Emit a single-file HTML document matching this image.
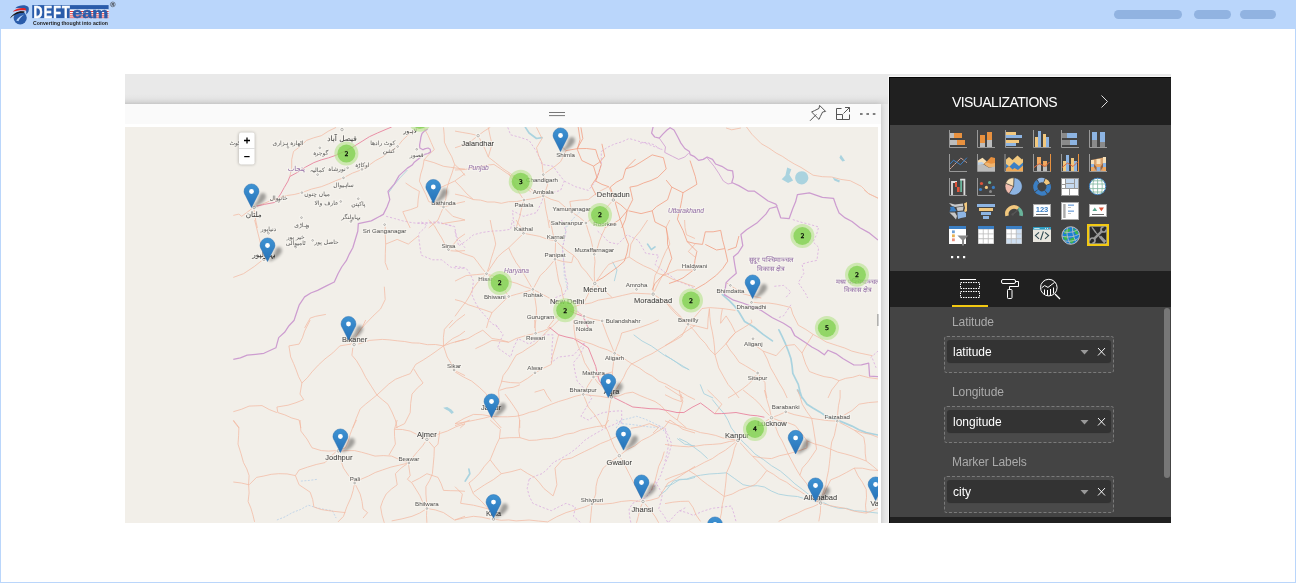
<!DOCTYPE html>
<html lang="en">
<head>
<meta charset="utf-8">
<title>DEFTeam - Map Visualization</title>
<style>
*{box-sizing:border-box;margin:0;padding:0}
html,body{width:1296px;height:583px;overflow:hidden;background:#fff;font-family:"Liberation Sans","DejaVu Sans",sans-serif}
#frame{position:absolute;left:0;top:0;width:1296px;height:583px;border:1px solid #bad6fb;border-top:none}
#hdr{position:absolute;left:0;top:0;width:1296px;height:29px;background:#bad6fb}
.pill{position:absolute;top:10px;height:9px;border-radius:5px;background:#91b3e1}
#logo{position:absolute;left:0;top:0}
#shot,#hdr{will-change:transform}
#shot{position:absolute;left:125px;top:74px;width:1046px;height:449px;background:#e9e9e9;overflow:hidden}
#shade{position:absolute;left:0;top:20px;width:764px;height:10px;background:linear-gradient(#e9e9e9,#dedede)}
#card{position:absolute;left:-6px;top:30px;width:762px;height:430px;background:#fafafa;box-shadow:0 0 6px rgba(0,0,0,.2)}
#cardwhite{position:absolute;left:0;top:20px;width:762px;height:410px;background:#fff}
#map{position:absolute;left:0;top:53px;width:753px;height:396px;background:#f2efe9;overflow:hidden}
#map svg{position:absolute;left:0;top:0}
#cicons{position:absolute;left:0;top:0}
#panel{position:absolute;left:764px;top:3px;width:282px;height:446px;background:#444;box-shadow:-1px -1px 0 #f6f6f6}
#pedge{position:absolute;left:0;top:0;width:282px;height:446px;box-shadow:inset 1px 1px 0 #050505;pointer-events:none}
#phead{position:absolute;left:0;top:0;width:282px;height:48px;background:#202020}
#ptabs{position:absolute;left:0;top:194px;width:282px;height:36px;background:#202020}
#pfoot{position:absolute;left:0;top:440px;width:282px;height:6px;background:#202020}
#ptitle{position:absolute;left:63px;top:17px;color:#fff;font-size:14px;letter-spacing:-.6px;line-height:16px;white-space:nowrap}
#picons{position:absolute;left:0;top:0}
#ul{position:absolute;left:63px;top:228px;width:36px;height:2px;background:#f2c811}
#scroll{position:absolute;left:275px;top:231px;width:6px;height:170px;background:#777;border-radius:3px}
.flabel{position:absolute;left:63px;color:#aaa;font-size:12px;line-height:14px;white-space:nowrap;letter-spacing:-.1px}
.fbox{position:absolute;left:55px;width:170px;height:37px;border:1px dashed #7a7a7a;border-radius:3px;background:#4a4a4a}
.fld{position:absolute;left:2px;top:3px;width:164px;height:22px;background:#333;border-radius:3px;color:#fff;font-size:12px;line-height:24px;padding-left:6px;box-shadow:0 1px 1px rgba(0,0,0,.35)}
.fld svg{position:absolute;left:0;top:0}
</style>
</head>
<body>
<div id="frame"></div>
<div id="hdr">
  <div class="pill" style="left:1114px;width:68px"></div>
  <div class="pill" style="left:1194px;width:37px"></div>
  <div class="pill" style="left:1240px;width:36px"></div>
  <svg id="logo" width="130" height="29" viewBox="0 0 130 29">
    <circle cx="20.2" cy="17.8" r="6.6" fill="#2a5caa"/>
    <path d="M10.2 18.6 C13 11.5 19 8 28.3 7.6 C29 10 28 13 25.5 14.5 C26 12 25 10.6 23 10.8 C17.5 11.3 13.5 14 10.2 18.6Z" fill="#bad6fb"/>
    <path d="M15.2 8.2 C19 4.8 25.5 4.4 28.4 7 C29.6 9.8 28.6 12.8 26 14.6 C27 11.4 25.8 8.6 22.6 8.2 C20 7.9 17.4 8 15.2 8.2Z" fill="#2a5caa"/>
    <path d="M12.6 11.6 C16.5 8.4 22 7.4 25.6 8.6 L26.4 10.6 C22 9.6 16.6 10.4 12.6 11.6Z" fill="#e02428"/>
    <path d="M10 18.4 C12.5 13.4 18.5 10.6 24.6 11.4 L24.2 12.8 C18.6 12.6 13.6 14.6 10 18.4Z" fill="#1a1a1a"/>
    <path d="M16.2 20.6 C18.2 17.4 21 15.4 24.4 14.4 C21.8 16 19.6 18.2 18.4 21.2Z" fill="#bad6fb"/>
    <rect x="32.2" y="5.1" width="37.6" height="13" fill="#2a5caa"/>
    <rect x="69.8" y="5.1" width="38.8" height="4.4" fill="#2a5caa"/>
    <rect x="69.8" y="9.5" width="38.8" height="8.6" fill="#fff"/>
    <g fill="#e0393e">
      <rect x="69.8" y="11" width="38.8" height="1"/>
      <rect x="69.8" y="13.2" width="38.8" height="1"/>
      <rect x="69.8" y="15.4" width="38.8" height="1"/>
      <rect x="69.8" y="17.4" width="38.8" height=".7"/>
    </g>
    <text transform="translate(33.4 17.6) scale(.78 1)" font-family="Liberation Sans, sans-serif" font-weight="bold" font-size="16" fill="#fff" stroke="#fff" stroke-width=".6" letter-spacing="1.6">DEFT</text>
    <text x="72.2" y="17.6" font-family="Liberation Sans, sans-serif" font-weight="bold" font-size="15.2" fill="#2a5caa" stroke="#2a5caa" stroke-width=".5" textLength="36" lengthAdjust="spacingAndGlyphs">eam</text>
    <text x="33" y="25" font-family="Liberation Sans, sans-serif" font-weight="bold" font-size="5.8" fill="#222" textLength="75" lengthAdjust="spacingAndGlyphs">Converting thought into action</text>
    <circle cx="112.8" cy="4.4" r="2.4" fill="none" stroke="#333" stroke-width=".5"/>
    <text x="111.6" y="5.8" font-family="Liberation Sans, sans-serif" font-size="3.8" font-weight="bold" fill="#333">R</text>
  </svg>
</div>
<div id="shot">
  <div id="shade"></div>
  <div id="card"><div id="cardwhite"></div></div>
  <div id="map">
<svg width="753" height="396" viewBox="125 127 753 396">
<defs><filter id="sh" x="-50%" y="-50%" width="200%" height="200%"><feGaussianBlur stdDeviation="1.8"/></filter><filter id="halo" x="125" y="127" width="753" height="396" filterUnits="userSpaceOnUse"><feMorphology in="SourceAlpha" operator="dilate" radius=".8" result="d"/><feGaussianBlur in="d" stdDeviation=".35" result="b"/><feFlood flood-color="#f8f6f1" flood-opacity=".9"/><feComposite in2="b" operator="in" result="h"/><feMerge><feMergeNode in="h"/><feMergeNode in="SourceGraphic"/></feMerge></filter><linearGradient id="mg" x1="0" y1="0" x2="0" y2="1"><stop offset="0" stop-color="#3f93d3"/><stop offset="1" stop-color="#2672b8"/></linearGradient><g id="pin"><path d="M.5 0L5.5 -5.5L8.5 -12.5C10 -14.5 13 -14.5 14 -12.5L14.5 -9.5C13 -6 9 -2.5 3.5 0Z" fill="#000" opacity=".34" filter="url(#sh)"/><path d="M0 .5L-6 -11.4C-6.9 -13 -7.45 -14.2 -7.45 -15.6A7.45 7.45 0 0 1 7.45 -15.6C7.45 -14.2 6.9 -13 6 -11.4Z" fill="url(#mg)" stroke="#2a6fae" stroke-width=".5"/><circle cx="0" cy="-15.5" r="2.4" fill="#fff"/></g><g id="cl"><circle r="12" fill="#b5e28c" fill-opacity=".6"/><circle r="9" fill="#6ecc39" fill-opacity=".62"/></g></defs>
<rect x="233" y="127" width="645" height="396" fill="#f2efe9"/>
<path d="M525.4 127.4L529.1 133.0L536.5 138.5L542.0 137.6M647.6 244.1L651.3 249.6L655.0 246.9M468.9 469.1L469.8 473.7L465.2 481.1M722.4 294.6L729.8 301.1L734.8 306.4L739.1 312.2L744.6 321.5L753.9 327.0L763.1 334.4L772.4 340.9M778.9 329.8L782.2 336.7L785.4 343.7L788.3 351.0L790.9 358.5L792.1 365.9L792.8 373.3L798.3 384.4L799.9 391.3L802.0 398.0M797.5 390.0L802.0 397.3L807.0 404.2L813.3 408.3L819.7 411.9L825.9 416.0L835.5 419.4L844.9 423.1L852.0 426.1L858.9 429.8L866.2 432.6L878.0 435.0" fill="none" stroke="#aad3df" stroke-width="1.7" stroke-linejoin="round" stroke-linecap="round"/>
<path d="M407.4 170.0L400.0 177.8L393.5 185.7L388.3 193.1M612.4 261.7L617.0 270.0L614.3 281.1M633.7 334.8L642.1 341.0L651.3 345.9L657.8 350.5L664.3 355.2L670.8 358.7L677.2 362.6L683.3 366.3L689.3 370.0M677.2 438.5L684.6 444.1L695.0 445.9M695.0 477.4L687.9 479.3L680.6 479.3L673.5 481.1L666.1 490.4L658.7 495.9M665.0 354.8L676.1 362.2L682.2 366.6L689.1 369.6M700.2 384.4L703.9 393.7L713.1 398.0M712.3 399.5L718.1 406.7L724.2 413.7L728.1 420.6L731.3 427.9L736.9 435.2L743.1 442.1L749.2 447.8L754.9 453.9L763.4 459.5L771.5 465.7L780.3 471.0L788.1 477.6L794.9 483.8L802.3 489.4L809.0 494.7L816.5 498.9L823.5 502.6L830.7 506.0L838.4 508.2L846.6 508.4L854.3 510.7L862.3 511.1L870.1 512.2L878.0 513.1M665.0 487.0L672.4 484.1L679.2 479.9L686.5 479.1L693.4 476.6L700.5 475.2L709.1 474.0L717.8 473.5L726.5 472.8L734.8 478.7L743.1 484.7L750.1 486.1L757.4 485.7L764.4 487.0L771.3 491.0L778.6 494.1L788.0 495.7L797.5 496.5L806.9 499.4L816.5 501.2M679.2 438.5L686.6 442.1L693.4 446.8L700.8 452.3L707.6 458.6" fill="none" stroke="#aad3df" stroke-width=".9" stroke-linejoin="round"/>
<path d="M300.9 481.1L309.3 480.4L317.6 479.3M276.9 520.0L285.0 516.8L292.6 512.5L300.7 509.4L308.3 505.2L316.2 507.6L324.3 509.4L332.4 510.7L336.1 518.1M584.6 207.0L575.4 216.3L570.4 221.8L566.1 228.0M566.1 225.6L565.3 233.0L564.2 240.5L562.4 247.8L563.4 257.0L563.9 266.3L564.3 275.6L566.3 282.9L568.0 290.4M616.1 428.0L621.7 420.0L629.1 418.4L636.5 416.3L644.0 418.7L651.3 421.9L657.7 425.2L664.3 428.0M616.1 420.0L621.7 423.7L631.0 424.4L640.2 425.6L649.4 427.0L658.7 427.4L664.3 431.1" fill="none" stroke="#b7cfe9" stroke-width=".8" stroke-dasharray="2 1.5"/>
<path d="M386.1 216.3L394.5 218.5L402.8 220.9L412.0 222.7L421.3 223.7L429.6 222.3L438.0 221.9L445.4 224.2L452.8 226.5M421.3 221.9L426.9 225.6L418.5 233.9L419.2 241.0L420.2 248.1L421.3 255.2L432.4 259.8L441.7 259.8L450.9 267.2L457.9 268.4L465.0 268.1M417.6 222.8L427.8 223.2L438.0 222.8L446.4 224.3L454.6 226.5L456.5 236.7L460.9 242.1L465.0 247.8M507.8 127.4L510.6 134.8L519.9 137.3L529.1 140.4L536.5 151.5L539.6 157.8L542.0 164.4L553.1 166.3L558.6 173.8L564.3 181.1L560.6 190.4L552.3 192.6L543.9 194.1L542.0 201.5L536.5 212.6L523.5 216.3L512.4 210.7L513.4 219.3L514.3 228.0M601.3 151.5L607.5 147.3L614.3 144.1L621.9 141.8L629.1 138.5L642.0 142.2L648.9 144.5L655.6 147.1L662.4 149.6M564.3 181.1L575.4 186.7L588.3 190.4L595.7 181.1L598.6 172.8L601.3 164.4L601.3 151.5M455.0 231.1L456.7 238.6L458.7 245.9L466.4 240.7L473.5 234.8L482.7 232.4L492.0 231.1L501.3 230.7L510.6 229.3L512.4 220.0M455.0 266.3L466.1 268.1L470.3 274.3L473.5 281.1L471.7 294.1L474.9 301.7L479.1 308.9L485.6 316.3L492.0 323.7L499.4 328.0M561.5 220.0L566.1 231.1L564.5 239.5L562.4 247.8L563.3 257.0L564.3 266.3L565.5 275.7L568.0 284.8L564.3 294.1L555.0 297.8L558.7 305.2L566.0 303.0L573.5 301.5L575.4 308.9L584.6 318.1L588.3 328.0M597.6 231.1L603.5 236.3L608.7 242.2L618.0 244.1L627.2 234.8L638.3 240.4L642.0 246.9L645.7 253.3L658.7 255.2L655.0 264.4L664.3 271.9L671.0 276.2L677.2 281.1L686.3 284.3L695.0 288.5M495.7 324.6L503.1 334.8L500.1 341.2L497.6 347.8L504.1 352.4L510.6 357.0L513.6 347.5L518.0 338.5L529.1 344.1L536.7 339.8L543.9 334.8L553.1 334.8L552.2 344.1L551.9 353.3L551.3 362.6L558.7 357.0L566.1 356.2L573.5 355.2L579.2 348.8L584.6 342.2L582.8 349.6L578.6 356.5L573.5 362.6L575.0 371.9L577.2 381.1L583.0 387.4L588.3 394.1L592.0 397.8L586.5 407.0L580.9 416.3L588.3 420.0L595.5 415.8L603.1 412.6L612.4 411.3L621.7 410.7L621.7 423.7M658.7 425.6L666.1 431.1L669.1 437.5L671.7 444.1L668.0 457.0L663.8 466.1L660.6 475.6L656.5 483.3L651.3 490.4L645.7 497.8L639.1 500.2L632.8 503.3L629.1 508.9L629.5 515.9L630.9 522.8M529.1 479.3L535.3 476.0L542.0 473.7L548.0 468.6L553.1 462.6L561.6 458.2L569.8 453.3L577.6 447.3L584.6 440.4L590.7 436.4L596.9 432.8L603.1 429.3L609.6 426.3L616.1 423.7L621.7 420.0M529.1 479.3L527.2 488.5L529.3 496.2L532.8 503.3L542.0 507.2L551.3 510.7L558.6 506.9L566.1 503.3L575.4 507.0L573.5 516.3L580.9 522.8M655.0 481.1L658.8 487.5L662.4 494.1L660.9 501.6L658.7 508.9L663.9 515.5L668.0 522.8L677.2 512.6L686.5 507.0M792.8 219.6L801.0 222.2L809.4 224.3L818.7 227.0L816.5 234.7L813.1 241.9L818.7 247.4L816.9 260.4L809.4 261.9L802.0 264.1L803.9 273.3L798.3 282.6L805.7 293.7L807.6 298.0M774.3 286.3L783.5 285.4L790.9 291.9L785.4 298.0M790.9 304.8L783.5 315.9L778.0 317.8M870.6 357.6L878.0 351.1M872.4 358.5L876.1 367.8M665.0 427.9L666.4 436.2L668.6 444.4L667.1 452.8L665.0 461.0M679.2 510.7L686.5 512.5L693.4 515.4L702.6 511.3L712.3 508.3L721.8 507.2L731.3 506.0L733.9 513.6L736.0 521.4M640.0 143.1L646.2 142.4L653.9 144.7L661.6 150.1" fill="none" stroke="#dcb4e0" stroke-width=".9" stroke-dasharray="2.2 1.8"/>
<path d="M253.7 207.0L262.0 204.3L270.3 200.8L278.7 197.8L286.3 195.6L294.2 194.5L301.9 192.6L311.4 189.1L321.3 186.7L328.7 183.8L336.0 180.6L343.5 177.8L352.5 173.1L362.0 169.6L368.8 165.4L375.3 160.7L382.4 157.0L389.9 151.7L397.6 146.5L402.5 140.2L408.3 134.8L414.5 130.6L421.3 127.4M289.8 176.5L291.7 168.2L291.7 159.7L293.5 151.5L300.3 146.3L306.5 140.4L313.8 137.8L321.3 135.7L328.5 131.1L336.1 127.4M233.3 215.4L238.9 214.1L241.7 216.3L252.8 208.0M253.7 208.0L255.6 220.0L257.4 228.0M424.1 128.3L428.0 135.2L431.1 142.4L434.3 149.6L428.9 154.4L424.1 159.8L433.9 162.6L443.5 166.3L450.7 167.3L457.8 168.3L465.0 169.1M443.5 127.4L444.2 134.8L444.4 142.2L447.8 149.7L451.8 156.8L454.6 164.4L460.3 169.6L465.0 175.6M424.1 159.8L422.9 167.0L420.7 174.0L419.4 181.1L422.6 187.9L425.9 194.6L428.7 201.5L436.1 204.4L443.5 207.0L450.7 205.1L457.8 203.1L465.0 201.5M405.6 183.0L412.3 187.5L419.4 191.3L418.2 199.1L417.6 207.0L410.3 209.7L402.8 211.7L406.4 219.9L410.2 228.0M443.5 207.0L440.7 213.5L438.0 220.0L428.7 228.0M443.5 207.0L452.8 216.3L465.0 220.0M432.4 190.4L440.0 187.8L447.3 184.5L454.6 181.1L465.0 173.7M454.6 164.4L452.1 172.9L449.1 181.1L446.6 189.6L445.9 198.5L443.5 207.0M254.6 220.0L257.4 231.1L260.2 242.2L262.3 250.5L263.9 258.9M263.9 258.9L254.6 266.3L243.5 273.7L233.3 277.4M385.2 225.6L385.2 234.8L385.7 244.1L385.3 253.3L385.2 262.6L388.0 270.0M385.7 244.1L397.2 239.4L408.3 244.1L418.5 235.7M428.7 220.0L434.3 225.6L437.9 231.9L441.7 238.0L445.0 244.5L449.1 250.6L457.0 251.2L465.0 250.6M465.0 233.9L458.3 238.5L453.7 244.1L449.1 249.6M441.7 223.7L452.8 221.9L465.0 220.0M384.3 286.7L385.2 299.6L380.6 308.9L373.0 316.1L365.7 323.7L362.0 328.0M304.6 328.0L310.2 318.1L315.7 316.3L325.9 314.4M449.1 328.0L456.6 320.7L465.0 314.4M365.7 320.0L362.5 326.7L358.3 333.0L350.9 344.1L339.8 345.9L332.8 352.9L325.0 358.9L318.3 365.1L312.0 371.9L307.3 377.8L301.9 383.0L300.0 394.1L303.7 399.6L296.0 402.7L288.0 405.2L276.9 407.0L277.8 412.6L284.9 414.9L291.8 418.0L299.1 420.0L300.9 428.0M310.2 320.0L304.6 331.1L302.4 337.8L299.1 344.1L288.9 345.9L290.7 357.0L293.6 363.5L296.2 370.0L298.6 376.7L301.9 383.0M233.3 411.7L241.4 409.3L249.1 406.1L262.0 405.6L269.2 409.5L276.9 412.6M358.3 344.1L369.4 340.4L382.4 339.4L389.8 339.9L397.2 340.8L404.6 341.5L412.0 342.9L419.4 343.1L427.4 344.7L435.5 344.5L443.5 345.9L450.5 343.3L457.7 341.2L465.0 339.4M352.8 347.8L351.9 355.2L356.5 360.7L361.4 368.9L365.7 377.4L371.3 386.2L376.9 395.0L382.3 399.7L388.0 404.3L392.0 412.0L395.4 420.0L397.2 428.0M465.0 331.1L459.2 335.4L452.8 338.5L443.5 345.9L437.1 350.6L430.6 355.2L423.2 360.0L415.7 364.4L410.2 373.7L402.7 376.4L395.4 379.3L388.8 384.0L382.9 389.5L376.9 395.0L371.3 399.6L365.6 404.1L360.2 408.9L356.3 418.3L352.8 428.0M443.5 345.9L447.2 357.0L451.0 363.2L453.7 370.0L465.0 375.6M452.8 320.0L444.4 329.3L443.4 337.6L443.5 345.9M413.9 369.1L418.2 376.2L423.1 383.0L417.2 388.1L412.0 394.1L410.7 403.3L410.2 412.6L404.6 423.7L395.4 428.0M465.0 423.7L460.2 428.0M233.3 420.9L238.9 428.0M233.3 420.0L238.9 427.4L238.6 435.7L238.0 444.1L240.9 453.3L243.5 462.6L246.8 468.9L249.1 475.6L248.6 484.2L249.1 492.9L248.1 501.5L250.9 508.1L252.9 514.9L254.6 521.9M233.3 482.0L241.3 483.0L249.1 484.8L256.5 477.4L263.9 476.0L271.2 474.3L278.7 473.7L287.1 473.9L295.4 475.6L299.1 470.0L307.6 467.1L316.2 464.5L325.0 462.6L330.4 456.9L336.1 451.5M300.0 420.0L300.9 431.1L307.0 439.1L312.0 447.8L321.3 450.6L328.7 451.1L336.1 450.6M356.5 420.0L352.8 427.4L350.2 434.1L348.3 441.2L345.4 447.8L336.1 451.5M336.1 451.5L345.4 450.7L354.6 450.6L361.5 452.2L368.3 454.1L375.0 456.1L383.3 455.6L391.7 456.1L399.8 459.8L408.3 462.6M338.9 455.2L343.5 468.1L348.5 475.5L354.6 482.0M354.6 482.0L361.6 479.0L368.5 476.0L375.2 472.5L382.4 470.0L390.9 467.1L399.6 465.1L408.3 463.0M354.6 483.0L353.1 490.5L350.9 497.8L346.8 506.9L343.5 516.3L338.0 521.9M354.6 483.0L360.2 494.1L362.0 501.4L363.0 508.9L367.6 512.6L363.0 518.1M295.4 475.6L299.1 484.8L310.2 492.2L312.7 499.5L313.9 507.0L321.1 509.5L328.7 510.7L337.0 511.7L345.4 512.6M426.9 439.4L422.6 445.8L417.6 451.5L412.9 457.2L408.3 463.0M397.2 420.0L394.4 429.3L402.4 429.5L410.2 431.1L418.5 435.3L426.9 439.4M465.0 423.7L455.9 426.8L447.2 431.1L440.2 433.4L433.5 436.4L426.9 439.4M426.9 439.4L434.3 447.8L434.0 456.4L433.2 465.1L432.4 473.7L429.6 480.4L425.9 486.7L425.9 494.0L426.5 501.2L426.9 508.5L426.5 515.6L426.9 522.8M408.3 463.0L410.2 475.6L407.4 479.3L412.0 483.0L415.9 489.2L419.8 495.5L422.8 502.3L426.9 508.5M408.3 463.0L401.4 467.8L395.4 473.7L397.2 484.8L391.4 489.1L386.1 494.1L382.9 500.4L380.6 507.0L382.0 515.0L384.3 522.8M412.0 482.0L419.6 478.2L426.9 473.7L438.0 477.4L441.1 483.7L443.5 490.4L450.7 490.7L457.8 490.8L465.0 491.3M426.9 508.5L435.3 509.9L443.5 512.6L454.6 520.0L465.0 516.3M426.9 508.5L419.8 513.0L412.0 516.3L401.9 518.9L391.7 520.9M388.9 455.2L395.4 444.1L394.6 436.7L394.4 429.3M439.8 431.1L438.0 444.1L434.3 447.8M455.0 131.1L462.8 132.5L470.5 133.8L478.1 135.7L483.9 131.3L490.2 127.4M478.1 135.7L481.9 142.7L485.3 149.8L488.3 157.0L495.6 162.7L502.8 168.6L510.6 173.7L517.7 179.6L525.4 184.8L532.8 190.4L543.9 195.9M455.0 147.8L466.1 144.1L472.3 140.1L478.1 135.7M455.0 170.0L464.3 169.5L473.5 168.1L483.6 165.7L493.9 164.4L500.5 168.8L507.0 173.3L513.8 177.3L520.7 181.1L525.6 186.9L530.9 192.2M543.3 174.6L547.6 184.8L543.9 195.9M543.3 174.6L549.1 170.4L555.0 166.3L560.6 161.7L566.1 150.6M536.5 127.4L542.0 138.5L536.5 147.8L538.6 155.4L542.0 162.6L543.3 174.6M558.7 127.4L555.0 140.4L560.7 145.4L566.1 150.6M543.9 195.9L545.7 208.9L547.7 218.4L549.4 228.0M543.9 195.9L551.1 199.3L558.7 201.5L565.0 207.0L571.7 212.0L579.1 217.0L585.9 222.8M543.9 195.9L534.0 198.5L523.9 200.0L516.4 201.6L508.7 201.7L501.3 203.3L494.4 202.0L487.3 202.0L480.5 200.1L473.5 199.6L464.5 196.2L455.0 194.1M523.9 200.0L521.6 208.1L519.8 216.3L516.1 228.0M613.3 200.0L607.5 206.4L601.3 212.6L593.6 217.6L585.9 222.8M613.3 200.0L611.6 193.1L608.7 186.7M488.3 127.4L490.0 135.8L492.0 144.1L488.3 157.0M455.0 181.1L461.1 187.3L466.9 193.9L473.5 199.6M508.7 173.7L512.6 180.2L515.8 187.1L519.7 193.7L523.9 200.0M571.7 212.0L569.8 201.5L579.0 200.2L588.3 199.6L594.6 194.7L601.3 190.4L608.7 186.7M549.4 220.0L551.6 226.9L553.0 234.0L555.6 240.7L555.3 250.0L555.0 259.3L556.2 266.6L557.4 273.8L558.7 281.1L561.2 287.7L562.5 294.7L564.3 301.5L566.1 308.9M523.5 233.3L531.6 234.8L539.7 236.4L547.5 239.3L555.6 240.7M516.1 220.0L520.2 226.4L523.5 233.3L516.1 240.6L508.7 247.8L502.9 252.2L497.6 257.0L492.0 265.3L486.5 273.7M486.5 273.7L482.0 268.3L477.9 262.6L473.5 257.0L462.4 253.3L455.0 249.6M486.5 273.7L493.9 276.2L501.2 279.0L508.7 281.1L516.9 283.4L524.7 286.7L532.8 289.4L540.4 293.1L547.7 297.2L555.0 301.5L565.2 308.9M486.5 273.7L489.2 266.4L491.1 258.9L493.5 251.5L495.7 244.1L494.2 236.6L492.0 229.3L490.2 220.0M486.5 273.7L477.2 283.0L473.0 288.8L469.9 295.3L466.1 301.5L460.4 308.8L455.0 316.3M486.5 273.7L476.3 274.6L466.1 275.6L455.0 281.1M508.7 296.5L516.7 294.2L524.8 292.0L532.8 289.4M508.7 296.5L501.3 284.8L493.8 279.3L486.5 273.7M508.7 296.5L503.1 301.8L497.6 307.2L492.0 312.6L488.7 320.1L486.5 328.0M532.8 289.4L528.8 282.6L524.9 275.7L520.8 269.0L516.1 262.6L512.1 255.3L508.7 247.8M532.8 289.4L536.6 282.5L540.2 275.6L545.6 270.5L550.4 265.0L555.0 259.3M532.8 289.4L535.1 299.1L536.5 308.9L536.1 318.5L534.6 328.0M585.9 222.8L588.1 230.6L590.7 238.4L592.5 246.3L594.3 254.3L595.0 261.6L594.3 268.9L594.3 276.2L594.8 283.5L589.2 292.2L584.6 301.5L577.4 305.6L569.8 308.9M605.0 228.3L602.0 234.7L599.4 241.2L597.4 248.0L594.3 254.3M555.6 240.7L561.2 246.0L567.1 250.9L573.5 255.2L578.1 260.6L581.5 266.9L586.4 272.1L590.6 277.8L594.8 283.5M555.0 259.3L563.2 261.6L571.7 262.6L573.5 255.2M594.8 283.5L600.4 288.6L606.8 292.7L612.4 297.8L622.6 295.4L632.8 293.1L643.0 293.6L653.1 294.1M594.8 283.5L599.3 277.0L603.7 270.6L608.7 264.4L615.4 261.7L622.4 259.8L629.1 257.0L630.9 244.1L635.0 237.2L640.2 231.1L647.6 220.0M653.1 294.1L660.5 298.8L668.0 303.3L674.2 310.1L680.8 316.5L686.5 323.7M653.1 294.1L657.6 284.7L662.4 275.6L669.9 272.9L677.2 270.0L686.1 270.0L695.0 270.0M569.8 308.9L577.5 312.0L584.6 316.3L593.3 319.3L602.2 320.9M577.2 305.2L584.3 304.1L591.4 302.9L598.2 300.2L605.3 298.9L612.4 297.8M653.1 294.1L653.4 284.8L655.0 275.6L659.1 267.9L662.1 259.7L665.6 251.7L669.8 244.1L667.9 235.8L666.1 227.4L669.8 220.0M629.1 257.0L636.2 261.7L643.7 265.8L651.5 269.2L658.7 273.7L666.1 275.8L673.0 279.4L680.4 281.6L687.6 284.3L695.0 286.7M566.1 308.9L560.9 314.0L555.0 318.1L547.6 328.0M455.0 299.6L462.0 301.5L468.5 304.8L475.4 307.0L483.7 309.7L492.0 312.6M695.0 238.5L686.5 234.8L685.0 227.5L684.6 220.0M695.0 257.0L688.3 251.5L695.0 244.1M558.7 320.0L551.3 327.4L545.5 332.7L540.4 338.7L534.6 344.1L528.5 347.8L522.5 351.9L516.1 355.2L512.0 362.1L508.0 369.1L503.1 375.6L501.2 383.1L498.5 390.4L499.4 401.5L496.3 408.3L492.0 414.4M573.5 320.0L574.1 329.3L575.4 338.5L578.4 346.6L581.9 354.4L584.6 362.6L589.3 370.0L593.9 377.4L598.4 383.4L604.2 388.2L608.7 394.1L611.5 396.9M535.6 333.3L543.6 330.8L551.3 327.4M535.6 333.3L525.8 335.6L516.1 338.5L508.7 342.2L500.4 341.1L492.0 340.4L483.8 344.7L475.4 348.7M535.6 333.3L534.6 320.0M535.0 372.8L543.1 368.4L551.3 364.4L552.5 356.0L555.0 347.8L558.7 334.8M535.0 372.8L527.7 378.3L519.8 383.0L510.5 382.6L501.3 381.1M455.0 371.9L463.2 376.8L471.7 381.1L479.3 387.3L486.5 394.1L488.5 401.4L490.1 408.8L491.1 416.3M491.1 416.3L499.4 416.8L507.8 416.8L516.1 416.3L523.0 414.7L529.6 412.3L536.5 410.7L543.8 407.3L551.2 404.3L558.7 401.5L566.9 399.1L575.0 396.3L583.3 394.4L591.8 395.5L600.3 396.3L608.7 397.8M491.1 416.3L482.4 414.7L473.5 414.4L464.0 418.5L455.0 423.7M491.1 416.3L496.2 422.2L501.3 428.0M499.4 390.4L506.1 388.2L513.2 387.3L519.8 384.8M505.0 394.1L509.5 400.1L513.8 406.3L518.0 412.6L519.6 420.2L519.8 428.0M601.3 320.0L604.2 327.3L606.9 334.8L610.8 344.1L614.6 353.3L613.5 362.6L612.4 371.9L612.5 380.2L611.8 388.5L611.5 396.9M614.6 353.3L621.0 356.4L626.9 360.5L632.8 364.4L639.6 368.1L645.8 372.7L652.6 376.4L658.7 381.1L666.3 384.2L673.3 388.3L680.7 391.9L687.7 396.0L695.0 399.6M614.6 353.3L617.0 346.6L619.7 339.9L621.7 333.0L631.0 330.4L640.2 327.4L649.6 324.0L658.7 320.0M614.6 353.3L607.3 349.8L599.5 347.3L592.0 344.1L583.6 341.5L575.4 338.5M611.5 396.9L618.7 396.0L625.6 393.3L632.8 392.2L640.1 395.6L647.5 398.6L655.0 401.5L661.0 405.6L665.8 411.1L671.3 415.8L677.2 420.0L686.5 428.0M611.5 396.9L615.5 390.5L619.5 384.1L623.5 377.6L626.6 370.7L630.9 364.4L637.9 360.8L644.8 357.0L652.0 353.7L658.7 349.6L665.9 345.4L672.8 340.8L679.6 335.8L686.5 331.1L695.0 325.6M593.5 377.0L588.0 385.5L583.3 394.4M593.5 377.0L603.0 374.7L612.4 371.9M611.5 396.9L609.8 404.7L608.7 412.6L607.2 420.4L605.0 428.0M583.3 394.4L588.3 407.0L593.8 413.6L598.6 420.7L603.1 428.0M455.0 342.2L468.0 338.5L475.3 334.2L482.8 330.2L492.0 338.5L500.5 339.8L508.7 342.2M534.6 392.2L543.9 389.4L547.2 395.7L551.3 401.5M677.2 420.0L680.1 410.8L682.8 401.5L680.9 394.1M455.0 423.7L465.2 422.0L475.4 420.0L483.3 418.3L491.1 416.3M455.0 425.6L462.5 423.0L469.8 420.0M490.2 420.0L500.4 429.3L499.4 438.5L496.0 445.5L493.1 452.7L490.2 459.8L484.5 466.2L479.5 473.2L473.5 479.3L468.9 483.0L473.5 494.1L481.3 501.1L488.3 508.9L493.9 519.1M499.4 438.5L509.6 437.7L519.8 437.6L529.1 440.4L536.5 440.1L543.9 438.9L551.3 438.5L558.7 436.8L565.9 434.2L573.5 433.0L580.7 430.1L588.3 428.3L596.6 426.6L605.0 425.6L608.7 420.0M519.8 420.0L518.9 431.1L519.8 437.6M490.2 459.8L495.6 466.9L501.3 473.7L511.1 471.7L520.7 469.1L527.6 473.5L534.6 477.4L539.5 482.8L543.9 488.5L553.1 495.9L556.9 484.8L555.9 476.5L555.0 468.1L562.4 459.8L571.7 458.0L578.1 454.7L584.6 451.5L592.6 447.7L600.5 443.6L608.7 440.4L619.8 434.8M473.5 492.2L484.6 484.8L493.3 479.7L501.3 473.7M605.0 425.6L608.2 431.9L610.6 438.5L614.3 447.4L619.3 455.7M619.3 455.7L627.2 449.6L634.9 445.8L641.7 440.4L649.4 436.7L656.8 432.0L664.3 427.4L669.8 420.0M619.3 455.7L610.9 461.6L603.1 468.1L597.6 479.3L596.0 486.6L595.7 494.1L592.0 503.9M619.3 455.7L625.4 466.3L629.1 473.7L632.8 481.1L636.5 487.8L639.9 494.5L643.0 501.5M493.9 519.1L501.2 520.3L508.7 519.9L516.1 520.9L529.1 520.0L538.3 521.0L547.6 521.9L556.6 516.8L566.1 512.6L575.4 509.8L584.6 507.0L592.0 503.9L602.2 504.2L612.4 503.3L621.6 501.4L630.9 500.6L643.0 501.5M643.0 501.5L650.9 500.1L658.7 497.8L663.3 490.4L668.0 483.0L674.4 479.7L680.5 475.8L686.5 471.9L695.0 466.3M643.0 501.5L649.3 508.7L655.0 516.3L658.7 522.8M643.0 501.5L640.1 508.7L638.3 516.3L636.5 522.8M592.0 503.9L591.1 513.3L590.2 522.8M653.1 433.0L658.7 427.4L649.4 423.7L640.3 426.7L630.9 428.3M664.3 451.5L662.1 459.1L658.7 466.3L656.9 473.7L655.0 481.1L651.3 490.4M455.0 486.7L462.4 494.1L460.6 503.3L473.5 505.2L480.9 507.0L488.3 508.9M455.0 520.0L464.2 517.9L473.5 516.3L481.9 517.2L490.2 519.1M669.8 420.0L676.4 424.5L682.8 429.3L695.0 433.0M726.1 128.0L731.7 129.8L740.9 128.0M746.5 127.0L752.0 134.4L761.3 143.7L768.9 148.0L776.1 153.0L782.5 156.4L788.4 160.4L794.6 164.1L801.0 167.4L807.1 171.3L813.1 175.2L822.3 176.7L831.7 177.0L840.8 179.4L850.2 180.7L861.3 186.3L868.7 193.7L878.0 198.0M864.1 190.0L868.7 193.7L878.0 198.3M726.1 282.6L734.5 288.1L742.8 293.7L752.0 296.2L761.3 298.0M688.1 324.3L681.7 336.3L673.5 341.2L665.0 345.6M688.1 324.3L682.3 319.0L676.1 314.1L670.3 307.8L665.0 301.1M688.1 324.3L695.2 316.4L702.0 308.5L709.4 307.6L722.4 308.5L735.4 310.4M688.1 324.3L697.9 326.4L707.6 328.9L708.1 318.7L709.4 308.5M688.1 324.3L694.5 330.9L700.2 338.1L705.4 343.4L709.6 349.6L715.0 354.8L718.7 367.8L723.3 376.1L728.0 384.4L733.8 391.0L739.1 398.0M709.4 308.5L709.8 316.3L710.6 324.0L712.3 331.7L713.6 339.3L714.5 347.0L715.0 354.8M726.1 315.9L731.2 324.0L735.4 332.6L730.4 338.3L725.6 344.1L720.4 349.5L715.0 354.8M726.1 315.9L720.6 323.3L721.1 315.9L722.4 308.5M735.4 332.6L743.8 327.6L752.0 322.4L751.1 319.6M735.4 332.6L730.3 337.8L726.1 343.7L730.1 350.1L734.9 356.0L739.1 362.2L745.3 365.7L751.4 369.4L757.6 373.0M753.0 343.7L763.1 351.1L776.1 355.7L785.4 345.6L794.6 344.6L802.0 353.0L805.6 346.7L809.3 340.5L813.1 334.4M757.6 373.0L753.4 379.1L748.3 384.4L742.0 389.3L735.4 393.7L728.0 398.0M757.6 373.0L765.0 382.6L765.3 390.4L766.9 398.0M763.1 351.1L767.3 359.2L770.6 367.8L774.9 375.2L779.0 382.7L783.5 390.0L787.2 398.0M751.1 302.0L759.9 303.0L768.7 303.0L776.2 304.1L783.6 305.7L790.9 307.6L792.8 314.1L798.3 325.2L805.9 329.5L813.1 334.4L819.7 338.0L826.1 341.9L837.2 345.6L844.7 348.0L851.8 351.1L859.4 353.0L872.4 355.7M802.0 353.0L805.7 364.1L809.4 371.5L816.7 374.3L824.1 376.6L831.9 377.8L839.1 380.7L845.7 378.3L852.7 377.3L859.4 375.2L868.6 377.6L878.0 378.9M839.1 380.7L831.7 390.0L828.0 398.0M665.0 386.3L671.2 390.2L677.3 394.2L683.5 398.0M737.9 440.4L743.3 435.8L749.0 431.7L754.9 427.9L763.2 422.8L771.5 417.7M771.5 417.7L778.7 415.0L785.7 411.8L794.2 414.6L803.0 416.5L811.7 418.4L820.2 419.6L828.7 420.7L837.3 421.2L845.9 425.7L854.3 430.2L862.2 432.7L870.3 434.4L878.0 437.3M771.5 417.7L769.5 408.5L766.8 399.5L764.4 390.0M771.5 417.7L765.3 411.2L759.7 404.2L754.5 399.0L748.8 394.6L743.1 390.0M771.5 417.7L775.3 426.2L778.6 435.0L782.2 441.0L785.2 447.4L788.1 453.9L791.9 461.1L795.7 468.2L799.9 475.2L806.3 483.2L811.7 491.8L816.7 497.1L820.7 503.1M737.9 440.4L742.8 445.7L747.6 451.1L752.6 456.3L759.8 463.3L766.8 470.5L773.5 474.3L779.7 478.9L786.7 482.3L792.8 487.0L799.3 490.8L805.5 494.9L811.7 498.9L820.7 503.1M665.0 420.8L671.9 423.7L679.1 425.7L686.1 428.4L693.4 430.2L700.5 432.6L708.1 433.8L715.5 435.4L722.8 437.9L730.4 439.1L737.9 440.4M737.9 440.4L731.7 445.2L725.5 450.1L718.7 454.1L712.3 458.6L704.3 462.4L696.6 466.6L688.7 470.5L680.9 473.9L672.8 476.6L665.0 479.9M737.9 440.4L734.5 448.3L732.6 456.8L730.0 464.9L726.5 472.8L726.0 480.8L725.1 488.6L724.2 496.5L722.3 504.7L721.4 513.2L719.4 521.4M665.0 444.4L672.8 445.6L680.7 446.3L688.7 446.8L696.6 446.0L704.4 444.8L712.3 444.4L721.0 443.7L729.3 441.5L737.9 440.4M771.5 417.7L779.3 420.7L787.4 422.5L795.2 425.5L801.4 433.0L807.0 440.9L814.8 444.0L822.9 446.1L830.7 449.2L837.6 452.1L844.9 453.9L852.1 455.9L859.2 458.3L866.2 461.0L872.2 465.6L878.0 470.5M788.1 453.9L797.6 451.2L807.0 448.0L807.0 440.9M788.1 453.9L779.6 455.7L771.5 458.6L762.0 457.9L752.6 456.3M837.3 421.2L835.8 428.3L834.4 435.3L831.7 442.0L830.7 449.2L830.2 456.3L829.4 463.5L828.5 470.6L827.0 477.6L825.9 484.7L822.8 493.8L820.7 503.1M820.7 503.1L828.7 505.4L836.8 506.9L844.9 508.3L851.8 510.6L859.0 512.1L866.2 513.1L878.0 508.3M820.7 503.1L823.8 495.3L827.0 487.5L830.7 479.9L838.8 476.5L846.6 472.4L854.3 468.1L862.3 468.2L870.1 469.9L878.0 470.5M811.7 418.4L813.1 426.1L814.3 433.8L815.5 441.4L816.5 449.2L812.1 455.8L807.6 462.2L802.3 468.1L799.9 475.2M837.3 421.2L837.7 413.4L838.5 405.6L840.1 397.9L840.1 390.0M837.3 421.2L844.2 415.1L852.2 410.4L859.1 404.2L868.5 402.6L878.0 401.8M866.2 461.0L865.2 453.1L865.1 445.2L863.8 437.3L854.3 430.2M665.0 394.7L673.1 398.7L681.6 401.8L679.2 390.0M707.6 390.0L714.8 397.0L721.8 404.2L714.7 413.7M688.7 470.5L695.4 474.7L701.3 479.9L707.6 484.7L716.0 490.4L724.2 496.5L732.1 494.1L739.4 490.2L747.2 487.5L754.9 484.7L761.3 477.9L766.8 470.5M820.7 503.1L820.4 512.3L818.8 521.4M820.7 503.1L813.1 506.6L805.1 509.4L797.5 513.1L787.9 516.9L778.6 521.4M665.0 503.6L672.8 502.2L680.7 501.4L688.7 501.2L693.1 507.6L696.1 515.0L700.5 521.4M797.5 390.0L800.2 397.0L802.3 404.2L806.7 411.5L811.7 418.4M854.3 468.1L857.8 475.5L862.4 482.2L866.2 489.4L866.5 497.3L865.5 505.2L866.2 513.1" fill="none" stroke="#f3b9a3" stroke-width=".75" stroke-linejoin="round"/>
<path d="M566.1 150.6L577.2 148.7L586.5 148.5L595.7 149.6L598.0 157.2L601.3 164.4L598.8 172.9L595.7 181.1L602.0 184.4L608.7 186.7M580.9 127.4L582.8 138.5L577.2 148.7M613.3 200.0L620.7 204.8L627.2 210.7L625.4 219.7L621.7 228.0M578.2 127.0L580.1 139.6L577.3 149.4L581.8 160.5L593.5 166.1L596.9 177.3L591.3 185.7L596.3 195.5M593.5 166.1L599.8 162.0L604.7 156.3L601.9 143.8M635.5 159.1L625.7 168.9L622.9 178.7L616.2 182.3L610.3 187.1L614.5 199.7M625.7 168.9L633.8 166.3L641.1 161.9L652.2 154.9L663.4 157.7L666.2 168.9L657.8 177.3L651.0 180.5L643.8 182.9L637.1 185.8L629.9 187.1L632.7 199.7L627.1 210.8L620.1 219.2L612.8 224.1L604.7 227.6M666.2 180.1L671.8 187.1L683.0 192.7L690.0 188.5L696.9 184.3L695.3 176.5L692.8 168.9L690.0 160.5M671.8 187.1L667.6 199.7L656.4 206.7L652.2 210.8L641.1 213.6L628.5 210.8M683.0 192.7L681.7 200.4L680.2 208.1L677.4 219.2L683.0 230.4L687.2 241.6L696.9 251.4M652.2 210.8L655.0 222.0L666.2 227.6L667.4 236.0L667.6 244.4L669.9 251.3L671.8 258.4L668.8 265.3L666.2 272.3L660.4 277.7L655.0 283.5L652.2 289.9M687.2 241.6L694.8 243.5L702.5 244.4L705.3 231.8L713.1 231.8L720.7 230.4L722.5 239.6L724.9 248.6L716.5 250.0L705.3 244.4M724.9 248.6L727.7 261.2L722.7 268.6L716.5 275.1L705.3 283.5L694.2 289.9M727.7 250.0L736.1 247.2L738.9 236.0M696.9 251.4L694.9 260.4L694.2 269.5L683.0 277.9L676.1 281.1L669.0 283.5M614.5 199.7L617.2 209.5L620.1 219.2L623.1 227.5L625.2 236.2L628.5 244.4L627.0 252.9L624.3 261.2L617.6 267.1L610.3 272.3L602.9 277.7L594.9 282.1" fill="none" stroke="#f29a7c" stroke-width=".75" stroke-linejoin="round"/>
<path d="M254.6 206.7L264.8 204.3L275.0 202.4L280.6 194.1L284.2 187.6L288.0 181.1L289.8 176.5L298.0 172.1L305.7 167.0L313.9 162.6L321.2 159.9L328.7 157.8L336.1 155.2L345.5 150.9L354.6 145.9L362.1 141.3L369.4 136.7L377.7 132.9L386.1 129.3L391.7 127.0M569.8 310.7L576.2 313.8L582.8 316.3L588.3 328.0M549.4 327.4L558.7 334.8L566.0 336.9L573.5 338.5L581.0 343.1L588.3 347.8L592.0 357.0L595.7 366.3L597.3 373.8L599.4 381.1L605.1 388.5L610.6 395.9L618.0 399.6L625.4 403.3L632.8 407.0L641.4 407.8L650.0 408.7L658.7 408.9L668.0 410.6L677.2 412.6M676.8 412.5L683.9 412.5L692.0 407.4L700.5 403.0L707.7 408.3L714.7 413.7L721.8 413.6L728.9 413.1L736.0 412.5L743.1 413.9L750.1 415.2L757.3 415.8L764.4 417.2" fill="none" stroke="#e98aa2" stroke-width=".95" stroke-linejoin="round"/>
<path d="M659.3 138.2L665.5 147.0L664.7 152.4L672.4 156.3L678.6 159.4L684.8 157.0L688.6 153.2M707.1 157.8L714.1 166.3L718.7 173.2L723.3 181.0L728.0 184.0L732.3 183.0" fill="none" stroke="#cf9bd0" stroke-width=".8" stroke-linejoin="round"/>
<path d="M427.6 129.1L424.6 130.9L422.0 133.5L420.9 137.2L420.4 140.7L419.6 145.0L419.8 148.0L423.0 149.8L424.6 148.9L428.0 148.0L430.2 149.3L430.6 151.9L428.0 153.5L424.6 154.4L422.0 156.1L417.8 159.6L414.3 162.2L412.2 165.0L407.4 168.1L399.1 175.6L394.4 183.9L388.0 191.3L389.8 199.6L387.0 207.0L383.3 214.4L371.3 220.9M371.3 220.9L358.3 223.7L357.8 231.3L355.6 238.5L352.8 247.8L349.3 254.1L346.3 260.7L341.7 267.0L338.0 273.7L334.3 282.0L325.9 286.1L317.6 290.4L310.8 293.0L304.6 296.9L299.1 305.2L295.4 316.3L293.9 320.9M294.4 320.0L289.0 325.7L284.6 332.3L278.7 337.6L275.9 347.8L263.9 353.3L255.6 354.3L247.2 355.2L240.4 357.8L233.3 359.3M777.0 206.7L780.7 217.8L789.1 218.7L792.8 208.5L795.6 201.8L797.4 194.6L809.4 192.8L822.4 197.4L833.5 198.3L836.1 205.8L839.1 213.1L845.2 217.9L852.0 221.5L859.9 227.7L868.7 232.6L878.0 240.0M777.0 206.7L769.6 208.5L765.9 214.1L757.6 222.4L746.5 229.8L740.9 234.4L742.8 245.6L738.1 253.0L733.5 256.7L734.8 265.0L736.3 273.3L729.8 278.9L726.1 282.6L724.3 295.6M724.3 294.6L733.5 300.2L742.8 303.0L752.0 306.7L761.3 310.4L772.4 317.8L783.5 323.3L790.9 328.0L794.6 335.4L805.7 342.8L811.8 347.0L818.3 350.5L824.3 354.8L828.0 350.2L835.8 353.6L842.8 358.5L853.9 365.0L861.4 364.8L868.7 363.1L869.6 376.1L878.0 376.7M653.1 126.9L651.6 133.1L654.7 137.0L659.3 138.2L663.1 133.9L667.0 130.0L670.1 127.7L674.0 130.0L677.8 137.0L680.9 143.1L684.8 148.5L689.4 151.6L690.2 154.7L694.0 156.3L698.6 160.4L703.3 159.4L707.1 157.0L712.5 159.4L715.6 164.0L721.8 166.3L728.0 170.2L732.6 170.9L733.4 177.1L731.8 182.5L738.8 185.6L748.0 191.0L754.2 191.0L761.9 196.4L768.1 201.0L775.8 204.1L777.3 206.4" fill="none" stroke="#cd9dd0" stroke-width="1.25" stroke-linejoin="round"/>
<path d="M787.2 167.4L791.3 169.3L789.4 174.8L793.1 180.4L788.1 183.0L781.7 179.3L785.4 175.6Z" fill="#aad3df"/>
<ellipse cx="801.7" cy="177.8" rx="6.6" ry="6.6" fill="#aad3df" transform="rotate(-25 801.7 177.8)"/>
<path d="M443.1 407.8L447.2 407.0L451.3 409.4L453.9 412.2L451.7 414.1L448.7 411.1L445.4 409.3Z" fill="#aad3df"/>
<path d="M840.9 154.8L845.0 160.7L842.4 161.5L839.4 157.8Z" fill="#aad3df"/>
<path d="M832.6 177.6L840.0 180.4L839.1 182.6L834.4 180.4Z" fill="#aad3df"/>
<g filter="url(#halo)"><circle cx="478.1" cy="135.7" r="1.3" fill="#f2efe9" stroke="#777" stroke-width=".5"/><text x="477.8" y="145.7" text-anchor="middle" font-family="Liberation Sans, DejaVu Sans, sans-serif" font-size="7.4" fill="#222" stroke="#222" stroke-width="0.22" >Jalandhar</text><text x="565.6" y="157.4" text-anchor="middle" font-family="Liberation Sans, DejaVu Sans, sans-serif" font-size="6.2" fill="#444" stroke="#444" stroke-width="0.12" >Shimla</text><text x="478.5" y="170.1" text-anchor="middle" font-family="Liberation Sans, DejaVu Sans, sans-serif" font-size="6.6" fill="#9464a8" stroke="#9464a8" stroke-width="0.12" font-style="italic">Punjab</text><circle cx="543.3" cy="174.6" r="0.9" fill="#f2efe9" stroke="#777" stroke-width=".5"/><text x="542.0" y="182.4" text-anchor="middle" font-family="Liberation Sans, DejaVu Sans, sans-serif" font-size="6.2" fill="#444" stroke="#444" stroke-width="0.12" >Chandigarh</text><circle cx="543.3" cy="195.9" r="0.9" fill="#f2efe9" stroke="#777" stroke-width=".5"/><text x="543.3" y="194.0" text-anchor="middle" font-family="Liberation Sans, DejaVu Sans, sans-serif" font-size="6.2" fill="#444" stroke="#444" stroke-width="0.12" >Ambala</text><circle cx="523.9" cy="200.0" r="0.9" fill="#f2efe9" stroke="#777" stroke-width=".5"/><text x="523.9" y="206.8" text-anchor="middle" font-family="Liberation Sans, DejaVu Sans, sans-serif" font-size="6.2" fill="#444" stroke="#444" stroke-width="0.12" >Patiala</text><circle cx="613.3" cy="200.0" r="1.3" fill="#f2efe9" stroke="#777" stroke-width=".5"/><text x="613.3" y="197.3" text-anchor="middle" font-family="Liberation Sans, DejaVu Sans, sans-serif" font-size="7.5" fill="#222" stroke="#222" stroke-width="0.22" >Dehradun</text><circle cx="571.7" cy="212.0" r="0.9" fill="#f2efe9" stroke="#777" stroke-width=".5"/><text x="571.7" y="210.7" text-anchor="middle" font-family="Liberation Sans, DejaVu Sans, sans-serif" font-size="6.2" fill="#444" stroke="#444" stroke-width="0.12" >Yamunanagar</text><circle cx="585.9" cy="223.0" r="0.9" fill="#f2efe9" stroke="#777" stroke-width=".5"/><text x="567.0" y="225.1" text-anchor="middle" font-family="Liberation Sans, DejaVu Sans, sans-serif" font-size="6.2" fill="#444" stroke="#444" stroke-width="0.12" >Saharanpur</text><text x="605.0" y="226.4" text-anchor="middle" font-family="Liberation Sans, DejaVu Sans, sans-serif" font-size="6.2" fill="#444" stroke="#444" stroke-width="0.12" >Roorkee</text><text x="685.9" y="212.7" text-anchor="middle" font-family="Liberation Sans, DejaVu Sans, sans-serif" font-size="6.6" fill="#9464a8" stroke="#9464a8" stroke-width="0.12" font-style="italic">Uttarakhand</text><circle cx="523.5" cy="233.3" r="0.9" fill="#f2efe9" stroke="#777" stroke-width=".5"/><text x="523.5" y="230.9" text-anchor="middle" font-family="Liberation Sans, DejaVu Sans, sans-serif" font-size="6.2" fill="#444" stroke="#444" stroke-width="0.12" >Kaithal</text><circle cx="555.6" cy="240.7" r="0.9" fill="#f2efe9" stroke="#777" stroke-width=".5"/><text x="555.6" y="238.5" text-anchor="middle" font-family="Liberation Sans, DejaVu Sans, sans-serif" font-size="6.2" fill="#444" stroke="#444" stroke-width="0.12" >Karnal</text><circle cx="555.0" cy="259.3" r="0.9" fill="#f2efe9" stroke="#777" stroke-width=".5"/><text x="555.0" y="256.8" text-anchor="middle" font-family="Liberation Sans, DejaVu Sans, sans-serif" font-size="6.2" fill="#444" stroke="#444" stroke-width="0.12" >Panipat</text><circle cx="594.3" cy="254.3" r="0.9" fill="#f2efe9" stroke="#777" stroke-width=".5"/><text x="594.3" y="251.8" text-anchor="middle" font-family="Liberation Sans, DejaVu Sans, sans-serif" font-size="6.2" fill="#444" stroke="#444" stroke-width="0.12" >Muzaffarnagar</text><text x="516.5" y="273.2" text-anchor="middle" font-family="Liberation Sans, DejaVu Sans, sans-serif" font-size="6.6" fill="#9464a8" stroke="#9464a8" stroke-width="0.12" font-style="italic">Haryana</text><circle cx="486.5" cy="273.7" r="0.9" fill="#f2efe9" stroke="#777" stroke-width=".5"/><text x="485.6" y="280.5" text-anchor="middle" font-family="Liberation Sans, DejaVu Sans, sans-serif" font-size="6.2" fill="#444" stroke="#444" stroke-width="0.12" >Hisar</text><circle cx="508.7" cy="296.5" r="0.9" fill="#f2efe9" stroke="#777" stroke-width=".5"/><text x="494.8" y="298.7" text-anchor="middle" font-family="Liberation Sans, DejaVu Sans, sans-serif" font-size="6.2" fill="#444" stroke="#444" stroke-width="0.12" >Bhiwani</text><circle cx="532.8" cy="289.4" r="0.9" fill="#f2efe9" stroke="#777" stroke-width=".5"/><text x="533.1" y="296.8" text-anchor="middle" font-family="Liberation Sans, DejaVu Sans, sans-serif" font-size="6.2" fill="#444" stroke="#444" stroke-width="0.12" >Rohtak</text><circle cx="594.8" cy="283.5" r="1.3" fill="#f2efe9" stroke="#777" stroke-width=".5"/><text x="594.8" y="292.1" text-anchor="middle" font-family="Liberation Sans, DejaVu Sans, sans-serif" font-size="7.5" fill="#222" stroke="#222" stroke-width="0.22" >Meerut</text><text x="567.0" y="303.6" text-anchor="middle" font-family="Liberation Sans, DejaVu Sans, sans-serif" font-size="7.5" fill="#222" stroke="#222" stroke-width="0.22" >New Delhi</text><text x="540.6" y="319.4" text-anchor="middle" font-family="Liberation Sans, DejaVu Sans, sans-serif" font-size="6.2" fill="#444" stroke="#444" stroke-width="0.12" >Gurugram</text><circle cx="584.1" cy="316.3" r="0.9" fill="#f2efe9" stroke="#777" stroke-width=".5"/><text x="584.1" y="323.7" text-anchor="middle" font-family="Liberation Sans, DejaVu Sans, sans-serif" font-size="6.2" fill="#444" stroke="#444" stroke-width="0.12" >Greater</text><text x="584.1" y="331.1" text-anchor="middle" font-family="Liberation Sans, DejaVu Sans, sans-serif" font-size="6.2" fill="#444" stroke="#444" stroke-width="0.12" >Noida</text><circle cx="602.2" cy="320.9" r="0.9" fill="#f2efe9" stroke="#777" stroke-width=".5"/><text x="623.1" y="323.1" text-anchor="middle" font-family="Liberation Sans, DejaVu Sans, sans-serif" font-size="6.2" fill="#444" stroke="#444" stroke-width="0.12" >Bulandshahr</text><circle cx="636.5" cy="289.4" r="0.9" fill="#f2efe9" stroke="#777" stroke-width=".5"/><text x="636.5" y="287.0" text-anchor="middle" font-family="Liberation Sans, DejaVu Sans, sans-serif" font-size="6.2" fill="#444" stroke="#444" stroke-width="0.12" >Amroha</text><circle cx="653.1" cy="294.1" r="1.3" fill="#f2efe9" stroke="#777" stroke-width=".5"/><text x="653.1" y="302.6" text-anchor="middle" font-family="Liberation Sans, DejaVu Sans, sans-serif" font-size="7.5" fill="#222" stroke="#222" stroke-width="0.22" >Moradabad</text><circle cx="694.6" cy="269.6" r="0.9" fill="#f2efe9" stroke="#777" stroke-width=".5"/><text x="694.6" y="267.7" text-anchor="middle" font-family="Liberation Sans, DejaVu Sans, sans-serif" font-size="6.2" fill="#444" stroke="#444" stroke-width="0.12" >Haldwani</text><circle cx="688.1" cy="324.3" r="0.9" fill="#f2efe9" stroke="#777" stroke-width=".5"/><text x="688.1" y="321.8" text-anchor="middle" font-family="Liberation Sans, DejaVu Sans, sans-serif" font-size="6.2" fill="#444" stroke="#444" stroke-width="0.12" >Bareilly</text><circle cx="730.4" cy="285.4" r="0.9" fill="#f2efe9" stroke="#777" stroke-width=".5"/><text x="730.4" y="292.5" text-anchor="middle" font-family="Liberation Sans, DejaVu Sans, sans-serif" font-size="6.2" fill="#444" stroke="#444" stroke-width="0.12" >Bhimdatta</text><circle cx="751.5" cy="302.4" r="0.9" fill="#f2efe9" stroke="#777" stroke-width=".5"/><text x="751.5" y="309.2" text-anchor="middle" font-family="Liberation Sans, DejaVu Sans, sans-serif" font-size="6.2" fill="#444" stroke="#444" stroke-width="0.12" >Dhangadhi</text><circle cx="753.0" cy="338.7" r="0.9" fill="#f2efe9" stroke="#777" stroke-width=".5"/><text x="753.3" y="345.9" text-anchor="middle" font-family="Liberation Sans, DejaVu Sans, sans-serif" font-size="6.2" fill="#444" stroke="#444" stroke-width="0.12" >Aliganj</text><circle cx="757.6" cy="373.0" r="0.9" fill="#f2efe9" stroke="#777" stroke-width=".5"/><text x="757.6" y="379.8" text-anchor="middle" font-family="Liberation Sans, DejaVu Sans, sans-serif" font-size="6.2" fill="#444" stroke="#444" stroke-width="0.12" >Sitapur</text><circle cx="535.6" cy="333.3" r="0.9" fill="#f2efe9" stroke="#777" stroke-width=".5"/><text x="535.6" y="340.3" text-anchor="middle" font-family="Liberation Sans, DejaVu Sans, sans-serif" font-size="6.2" fill="#444" stroke="#444" stroke-width="0.12" >Rewari</text><circle cx="535.0" cy="372.8" r="0.9" fill="#f2efe9" stroke="#777" stroke-width=".5"/><text x="535.0" y="370.3" text-anchor="middle" font-family="Liberation Sans, DejaVu Sans, sans-serif" font-size="6.2" fill="#444" stroke="#444" stroke-width="0.12" >Alwar</text><circle cx="614.6" cy="353.3" r="0.9" fill="#f2efe9" stroke="#777" stroke-width=".5"/><text x="614.6" y="360.1" text-anchor="middle" font-family="Liberation Sans, DejaVu Sans, sans-serif" font-size="6.2" fill="#444" stroke="#444" stroke-width="0.12" >Aligarh</text><circle cx="593.5" cy="377.0" r="0.9" fill="#f2efe9" stroke="#777" stroke-width=".5"/><text x="593.5" y="374.6" text-anchor="middle" font-family="Liberation Sans, DejaVu Sans, sans-serif" font-size="6.2" fill="#444" stroke="#444" stroke-width="0.12" >Mathura</text><circle cx="583.3" cy="394.4" r="0.9" fill="#f2efe9" stroke="#777" stroke-width=".5"/><text x="583.1" y="392.0" text-anchor="middle" font-family="Liberation Sans, DejaVu Sans, sans-serif" font-size="6.2" fill="#444" stroke="#444" stroke-width="0.12" >Bharatpur</text><circle cx="611.5" cy="396.9" r="1.3" fill="#f2efe9" stroke="#777" stroke-width=".5"/><text x="611.5" y="393.9" text-anchor="middle" font-family="Liberation Sans, DejaVu Sans, sans-serif" font-size="7.4" fill="#222" stroke="#222" stroke-width="0.22" >Agra</text><text x="491.1" y="409.6" text-anchor="middle" font-family="Liberation Sans, DejaVu Sans, sans-serif" font-size="7.4" fill="#222" stroke="#222" stroke-width="0.22" >Jaipur</text><circle cx="454.1" cy="370.0" r="0.9" fill="#f2efe9" stroke="#777" stroke-width=".5"/><text x="454.1" y="367.5" text-anchor="middle" font-family="Liberation Sans, DejaVu Sans, sans-serif" font-size="6.2" fill="#444" stroke="#444" stroke-width="0.12" >Sikar</text><circle cx="354.1" cy="344.6" r="1.3" fill="#f2efe9" stroke="#777" stroke-width=".5"/><text x="354.6" y="341.7" text-anchor="middle" font-family="Liberation Sans, DejaVu Sans, sans-serif" font-size="7.4" fill="#222" stroke="#222" stroke-width="0.22" >Bikaner</text><circle cx="384.6" cy="224.6" r="0.9" fill="#f2efe9" stroke="#777" stroke-width=".5"/><text x="384.6" y="232.7" text-anchor="middle" font-family="Liberation Sans, DejaVu Sans, sans-serif" font-size="6.2" fill="#444" stroke="#444" stroke-width="0.12" >Sri Ganganagar</text><circle cx="448.5" cy="249.6" r="0.9" fill="#f2efe9" stroke="#777" stroke-width=".5"/><text x="448.5" y="247.5" text-anchor="middle" font-family="Liberation Sans, DejaVu Sans, sans-serif" font-size="6.2" fill="#444" stroke="#444" stroke-width="0.12" >Sirsa</text><circle cx="443.5" cy="207.0" r="0.9" fill="#f2efe9" stroke="#777" stroke-width=".5"/><text x="443.5" y="204.9" text-anchor="middle" font-family="Liberation Sans, DejaVu Sans, sans-serif" font-size="6.2" fill="#444" stroke="#444" stroke-width="0.12" >Bathinda</text><circle cx="338.3" cy="450.9" r="1.3" fill="#f2efe9" stroke="#777" stroke-width=".5"/><text x="338.9" y="460.2" text-anchor="middle" font-family="Liberation Sans, DejaVu Sans, sans-serif" font-size="7.5" fill="#222" stroke="#222" stroke-width="0.22" >Jodhpur</text><circle cx="354.6" cy="483.0" r="0.9" fill="#f2efe9" stroke="#777" stroke-width=".5"/><text x="355.0" y="480.5" text-anchor="middle" font-family="Liberation Sans, DejaVu Sans, sans-serif" font-size="6.2" fill="#444" stroke="#444" stroke-width="0.12" >Pali</text><circle cx="426.9" cy="439.4" r="1.3" fill="#f2efe9" stroke="#777" stroke-width=".5"/><text x="426.9" y="437.1" text-anchor="middle" font-family="Liberation Sans, DejaVu Sans, sans-serif" font-size="7.5" fill="#222" stroke="#222" stroke-width="0.22" >Ajmer</text><circle cx="408.9" cy="463.0" r="0.9" fill="#f2efe9" stroke="#777" stroke-width=".5"/><text x="408.9" y="460.5" text-anchor="middle" font-family="Liberation Sans, DejaVu Sans, sans-serif" font-size="6.2" fill="#444" stroke="#444" stroke-width="0.12" >Beawar</text><circle cx="426.9" cy="508.5" r="0.9" fill="#f2efe9" stroke="#777" stroke-width=".5"/><text x="426.9" y="506.1" text-anchor="middle" font-family="Liberation Sans, DejaVu Sans, sans-serif" font-size="6.2" fill="#444" stroke="#444" stroke-width="0.12" >Bhilwara</text><circle cx="619.3" cy="455.7" r="1.3" fill="#f2efe9" stroke="#777" stroke-width=".5"/><text x="619.3" y="464.8" text-anchor="middle" font-family="Liberation Sans, DejaVu Sans, sans-serif" font-size="7.5" fill="#222" stroke="#222" stroke-width="0.22" >Gwalior</text><circle cx="643.0" cy="501.5" r="1.3" fill="#f2efe9" stroke="#777" stroke-width=".5"/><text x="642.4" y="512.1" text-anchor="middle" font-family="Liberation Sans, DejaVu Sans, sans-serif" font-size="7.5" fill="#222" stroke="#222" stroke-width="0.22" >Jhansi</text><circle cx="592.0" cy="503.9" r="0.9" fill="#f2efe9" stroke="#777" stroke-width=".5"/><text x="592.0" y="501.8" text-anchor="middle" font-family="Liberation Sans, DejaVu Sans, sans-serif" font-size="6.2" fill="#444" stroke="#444" stroke-width="0.12" >Shivpuri</text><circle cx="493.5" cy="519.1" r="1.3" fill="#f2efe9" stroke="#777" stroke-width=".5"/><text x="493.5" y="515.7" text-anchor="middle" font-family="Liberation Sans, DejaVu Sans, sans-serif" font-size="7.4" fill="#222" stroke="#222" stroke-width="0.22" >Kota</text><circle cx="785.7" cy="411.8" r="0.9" fill="#f2efe9" stroke="#777" stroke-width=".5"/><text x="785.7" y="409.4" text-anchor="middle" font-family="Liberation Sans, DejaVu Sans, sans-serif" font-size="6.2" fill="#444" stroke="#444" stroke-width="0.12" >Barabanki</text><circle cx="771.5" cy="417.7" r="1.3" fill="#f2efe9" stroke="#777" stroke-width=".5"/><text x="772.0" y="426.2" text-anchor="middle" font-family="Liberation Sans, DejaVu Sans, sans-serif" font-size="7.5" fill="#222" stroke="#222" stroke-width="0.22" >Lucknow</text><circle cx="837.3" cy="421.2" r="0.9" fill="#f2efe9" stroke="#777" stroke-width=".5"/><text x="837.3" y="418.7" text-anchor="middle" font-family="Liberation Sans, DejaVu Sans, sans-serif" font-size="6.2" fill="#444" stroke="#444" stroke-width="0.12" >Faizabad</text><circle cx="737.9" cy="440.4" r="1.3" fill="#f2efe9" stroke="#777" stroke-width=".5"/><text x="737.2" y="437.6" text-anchor="middle" font-family="Liberation Sans, DejaVu Sans, sans-serif" font-size="7.5" fill="#222" stroke="#222" stroke-width="0.22" >Kanpur</text><circle cx="820.7" cy="503.1" r="1.3" fill="#f2efe9" stroke="#777" stroke-width=".5"/><text x="820.5" y="500.3" text-anchor="middle" font-family="Liberation Sans, DejaVu Sans, sans-serif" font-size="7.5" fill="#222" stroke="#222" stroke-width="0.22" >Allahabad</text><text x="870.4" y="506.4" font-family="Liberation Sans, DejaVu Sans, sans-serif" font-size="7.5" fill="#222" stroke="#222" stroke-width=".22">Varanasi</text><text x="235.2" y="144.8" text-anchor="middle" font-family="DejaVu Sans, Liberation Sans, sans-serif" font-size="5.9" fill="#444" stroke="#444" stroke-width="0.12" >کوٹ</text><circle cx="288.0" cy="147.4" r="0.9" fill="#f2efe9" stroke="#777" stroke-width=".5"/><text x="288.0" y="145.2" text-anchor="middle" font-family="DejaVu Sans, Liberation Sans, sans-serif" font-size="5.9" fill="#444" stroke="#444" stroke-width="0.12" >اٹھارہ ہزاری</text><circle cx="342.0" cy="129.6" r="1.3" fill="#f2efe9" stroke="#777" stroke-width=".5"/><text x="342.0" y="140.5" text-anchor="middle" font-family="DejaVu Sans, Liberation Sans, sans-serif" font-size="7.3" fill="#222" stroke="#222" stroke-width="0.22" >فیصل آباد</text><circle cx="319.8" cy="147.8" r="0.9" fill="#f2efe9" stroke="#777" stroke-width=".5"/><text x="320.4" y="155.4" text-anchor="middle" font-family="DejaVu Sans, Liberation Sans, sans-serif" font-size="5.9" fill="#444" stroke="#444" stroke-width="0.12" >گوجرہ</text><circle cx="397.6" cy="146.5" r="0.9" fill="#f2efe9" stroke="#777" stroke-width=".5"/><text x="382.8" y="145.2" text-anchor="middle" font-family="DejaVu Sans, Liberation Sans, sans-serif" font-size="5.9" fill="#444" stroke="#444" stroke-width="0.12" >کوٹ رادھا</text><text x="388.9" y="152.6" text-anchor="middle" font-family="DejaVu Sans, Liberation Sans, sans-serif" font-size="5.9" fill="#444" stroke="#444" stroke-width="0.12" >کشن</text><text x="410.2" y="132.9" text-anchor="middle" font-family="DejaVu Sans, Liberation Sans, sans-serif" font-size="6.3" fill="#222" stroke="#222" stroke-width="0.12" >لاہور</text><circle cx="416.7" cy="149.3" r="0.9" fill="#f2efe9" stroke="#777" stroke-width=".5"/><text x="416.7" y="156.7" text-anchor="middle" font-family="DejaVu Sans, Liberation Sans, sans-serif" font-size="5.9" fill="#444" stroke="#444" stroke-width="0.12" >قصور</text><text x="296.3" y="171.0" text-anchor="middle" font-family="DejaVu Sans, Liberation Sans, sans-serif" font-size="7" fill="#9464a8" stroke="#9464a8" stroke-width="0.12" >پنجاب</text><circle cx="317.6" cy="174.6" r="0.9" fill="#f2efe9" stroke="#777" stroke-width=".5"/><text x="317.6" y="172.1" text-anchor="middle" font-family="DejaVu Sans, Liberation Sans, sans-serif" font-size="5.9" fill="#444" stroke="#444" stroke-width="0.12" >کمالیہ</text><circle cx="347.6" cy="167.8" r="0.9" fill="#f2efe9" stroke="#777" stroke-width=".5"/><text x="337.0" y="170.6" text-anchor="middle" font-family="DejaVu Sans, Liberation Sans, sans-serif" font-size="5.9" fill="#444" stroke="#444" stroke-width="0.12" >نورشاہ</text><circle cx="362.0" cy="169.4" r="0.9" fill="#f2efe9" stroke="#777" stroke-width=".5"/><text x="362.0" y="167.1" text-anchor="middle" font-family="DejaVu Sans, Liberation Sans, sans-serif" font-size="5.9" fill="#444" stroke="#444" stroke-width="0.12" >اوکاڑہ</text><circle cx="343.5" cy="177.8" r="0.9" fill="#f2efe9" stroke="#777" stroke-width=".5"/><text x="343.5" y="186.9" text-anchor="middle" font-family="DejaVu Sans, Liberation Sans, sans-serif" font-size="5.9" fill="#444" stroke="#444" stroke-width="0.12" >ساہیوال</text><circle cx="301.9" cy="192.6" r="0.9" fill="#f2efe9" stroke="#777" stroke-width=".5"/><text x="317.0" y="196.1" text-anchor="middle" font-family="DejaVu Sans, Liberation Sans, sans-serif" font-size="5.9" fill="#444" stroke="#444" stroke-width="0.12" >میاں چنوں</text><circle cx="278.7" cy="201.5" r="0.9" fill="#f2efe9" stroke="#777" stroke-width=".5"/><text x="278.7" y="199.5" text-anchor="middle" font-family="DejaVu Sans, Liberation Sans, sans-serif" font-size="5.9" fill="#444" stroke="#444" stroke-width="0.12" >خانیوال</text><circle cx="340.7" cy="201.5" r="0.9" fill="#f2efe9" stroke="#777" stroke-width=".5"/><text x="326.5" y="204.8" text-anchor="middle" font-family="DejaVu Sans, Liberation Sans, sans-serif" font-size="5.9" fill="#444" stroke="#444" stroke-width="0.12" >عارف والا</text><circle cx="358.3" cy="198.7" r="0.9" fill="#f2efe9" stroke="#777" stroke-width=".5"/><text x="358.3" y="206.3" text-anchor="middle" font-family="DejaVu Sans, Liberation Sans, sans-serif" font-size="5.9" fill="#444" stroke="#444" stroke-width="0.12" >پاکپتن</text><circle cx="254.1" cy="207.4" r="1.3" fill="#f2efe9" stroke="#777" stroke-width=".5"/><text x="253.7" y="217.4" text-anchor="middle" font-family="DejaVu Sans, Liberation Sans, sans-serif" font-size="7.3" fill="#222" stroke="#222" stroke-width="0.22" >ملتان</text><circle cx="350.9" cy="221.5" r="0.9" fill="#f2efe9" stroke="#777" stroke-width=".5"/><text x="350.9" y="218.9" text-anchor="middle" font-family="DejaVu Sans, Liberation Sans, sans-serif" font-size="5.9" fill="#444" stroke="#444" stroke-width="0.12" >بہاولنگر</text><circle cx="301.5" cy="217.6" r="0.9" fill="#f2efe9" stroke="#777" stroke-width=".5"/><text x="301.9" y="226.7" text-anchor="middle" font-family="DejaVu Sans, Liberation Sans, sans-serif" font-size="5.9" fill="#444" stroke="#444" stroke-width="0.12" >وہاڑی</text><circle cx="268.5" cy="233.3" r="0.9" fill="#f2efe9" stroke="#777" stroke-width=".5"/><text x="268.5" y="230.8" text-anchor="middle" font-family="DejaVu Sans, Liberation Sans, sans-serif" font-size="5.9" fill="#444" stroke="#444" stroke-width="0.12" >دنیاپور</text><text x="295.7" y="238.7" text-anchor="middle" font-family="DejaVu Sans, Liberation Sans, sans-serif" font-size="5.9" fill="#444" stroke="#444" stroke-width="0.12" >خیر پور</text><circle cx="295.7" cy="247.2" r="0.9" fill="#f2efe9" stroke="#777" stroke-width=".5"/><text x="295.7" y="245.2" text-anchor="middle" font-family="DejaVu Sans, Liberation Sans, sans-serif" font-size="5.9" fill="#444" stroke="#444" stroke-width="0.12" >ٹامیوالی</text><circle cx="312.6" cy="240.4" r="0.9" fill="#f2efe9" stroke="#777" stroke-width=".5"/><text x="326.5" y="243.7" text-anchor="middle" font-family="DejaVu Sans, Liberation Sans, sans-serif" font-size="5.9" fill="#444" stroke="#444" stroke-width="0.12" >حاصل پور</text><circle cx="263.9" cy="259.3" r="1.3" fill="#f2efe9" stroke="#777" stroke-width=".5"/><text x="263.9" y="257.2" text-anchor="middle" font-family="DejaVu Sans, Liberation Sans, sans-serif" font-size="7.3" fill="#222" stroke="#222" stroke-width="0.22" >بہاولپور</text><text x="770.6" y="262.3" text-anchor="middle" font-family="DejaVu Sans, Liberation Sans, sans-serif" font-size="6.6" fill="#9464a8" stroke="#9464a8" stroke-width="0.12" >सुदूर पश्चिमाञ्चल</text><text x="770.6" y="270.6" text-anchor="middle" font-family="DejaVu Sans, Liberation Sans, sans-serif" font-size="6.6" fill="#9464a8" stroke="#9464a8" stroke-width="0.12" >विकास क्षेत्र</text><text x="857.6" y="283.6" text-anchor="middle" font-family="DejaVu Sans, Liberation Sans, sans-serif" font-size="6.6" fill="#9464a8" stroke="#9464a8" stroke-width="0.12" >मध्य पश्चिमाञ्चल</text><text x="857.6" y="292.3" text-anchor="middle" font-family="DejaVu Sans, Liberation Sans, sans-serif" font-size="6.6" fill="#9464a8" stroke="#9464a8" stroke-width="0.12" >विकास क्षेत्र</text></g>
<use href="#pin" x="560.5" y="151"/>
<use href="#pin" x="433.3" y="202.5"/>
<use href="#pin" x="251.5" y="207"/>
<use href="#pin" x="267.5" y="261"/>
<use href="#pin" x="752.6" y="298"/>
<use href="#pin" x="348.5" y="339.5"/>
<use href="#pin" x="608.3" y="397"/>
<use href="#pin" x="491.5" y="417"/>
<use href="#pin" x="623.5" y="449.6"/>
<use href="#pin" x="340.4" y="452"/>
<use href="#pin" x="795.6" y="453.4"/>
<use href="#pin" x="641.5" y="498"/>
<use href="#pin" x="875.6" y="500"/>
<use href="#pin" x="815.5" y="501"/>
<use href="#pin" x="493.5" y="517.6"/>
<use href="#pin" x="715" y="540"/>
<use href="#cl" x="346.4" y="153.6"/>
<text x="346.4" y="155.9" text-anchor="middle" font-family="DejaVu Sans, Liberation Sans, sans-serif" font-size="6.3" fill="#000" stroke="#000" stroke-width=".28">2</text>
<use href="#cl" x="420" y="119.7"/>
<use href="#cl" x="520.7" y="181.7"/>
<text x="520.7" y="184.0" text-anchor="middle" font-family="DejaVu Sans, Liberation Sans, sans-serif" font-size="6.3" fill="#000" stroke="#000" stroke-width=".28">3</text>
<use href="#cl" x="600" y="215"/>
<text x="600" y="217.3" text-anchor="middle" font-family="DejaVu Sans, Liberation Sans, sans-serif" font-size="6.3" fill="#000" stroke="#000" stroke-width=".28">2</text>
<use href="#cl" x="499.8" y="283"/>
<text x="499.8" y="285.3" text-anchor="middle" font-family="DejaVu Sans, Liberation Sans, sans-serif" font-size="6.3" fill="#000" stroke="#000" stroke-width=".28">2</text>
<use href="#cl" x="565.2" y="310.2"/>
<text x="565.2" y="312.5" text-anchor="middle" font-family="DejaVu Sans, Liberation Sans, sans-serif" font-size="6.3" fill="#000" stroke="#000" stroke-width=".28">2</text>
<use href="#cl" x="691" y="300.5"/>
<text x="691" y="302.8" text-anchor="middle" font-family="DejaVu Sans, Liberation Sans, sans-serif" font-size="6.3" fill="#000" stroke="#000" stroke-width=".28">2</text>
<use href="#cl" x="802.4" y="236"/>
<text x="802.4" y="238.3" text-anchor="middle" font-family="DejaVu Sans, Liberation Sans, sans-serif" font-size="6.3" fill="#000" stroke="#000" stroke-width=".28">2</text>
<use href="#cl" x="857" y="274.8"/>
<text x="857" y="277.1" text-anchor="middle" font-family="DejaVu Sans, Liberation Sans, sans-serif" font-size="6.3" fill="#000" stroke="#000" stroke-width=".28">2</text>
<use href="#cl" x="826.9" y="328"/>
<text x="826.9" y="330.3" text-anchor="middle" font-family="DejaVu Sans, Liberation Sans, sans-serif" font-size="6.3" fill="#000" stroke="#000" stroke-width=".28">5</text>
<use href="#cl" x="755" y="429"/>
<text x="755" y="431.3" text-anchor="middle" font-family="DejaVu Sans, Liberation Sans, sans-serif" font-size="6.3" fill="#000" stroke="#000" stroke-width=".28">4</text>
<rect x="238.6" y="132.4" width="16.2" height="32.4" rx="2.4" fill="#000" opacity=".25" filter="url(#sh)"/>
<rect x="239" y="132.6" width="15.6" height="31.8" rx="2.2" fill="#fff"/>
<rect x="239" y="148.3" width="15.6" height=".6" fill="#ccc"/>
<path d="M244 140.5H250M247 137.5V143.5" stroke="#000" stroke-width="1.3"/><path d="M244.2 156.6H249.6" stroke="#000" stroke-width="1.2"/>
</svg>
  </div>
<svg id="cicons" width="764" height="300" viewBox="125 74 764 300">
<path d="M549 112.5H565M549 115.6H565" stroke="#777" stroke-width="1"/>
<g fill="none" stroke="#555" stroke-width="1">
<path d="M810 120.8L816.4 114.4"/>
<path d="M819.6 105.4L825.6 111.4L822.6 112L820.4 116.4L819 119.4L811.6 112L814.6 110.6L819 108.4Z" stroke-linejoin="round"/>
<path d="M841.5 108.5H836.5V119.5H849.5V114.5"/>
<path d="M836.5 114.5H842.5V119.5"/>
<path d="M843.5 113.5L849.5 107.5M845 107.5H849.5V112"/>
</g>
<path d="M877.9 314V326" stroke="#888" stroke-width="1"/>
<path d="M860 114H862.6M866.4 114H869M872.8 114H875.4" stroke="#555" stroke-width="1.6"/>
</svg>
<div id="panel">
<div id="phead"><div id="ptitle">VISUALIZATIONS</div></div>
<div id="ptabs"></div><div id="ul"></div><div id="pfoot"></div>
<svg id="picons" width="282" height="446" viewBox="0 0 282 446">
<g transform="translate(60 53)"><path d="M.5 0V17.5H18" fill="none" stroke="#999" stroke-width="1"/><rect x="1" y="3" width="4" height="5" fill="#bdbdbd"/><rect x="5" y="3" width="8" height="5" fill="#e8913f"/><rect x="1" y="10" width="7" height="5" fill="#bdbdbd"/><rect x="8" y="10" width="8" height="5" fill="#e8913f"/></g>
<g transform="translate(88 53)"><path d="M.5 0V17.5H18" fill="none" stroke="#999" stroke-width="1"/><rect x="3" y="5" width="5" height="8" fill="#e8913f"/><rect x="3" y="13" width="5" height="4" fill="#bdbdbd"/><rect x="10" y="2" width="5" height="8" fill="#e8913f"/><rect x="10" y="10" width="5" height="7" fill="#bdbdbd"/></g>
<g transform="translate(116 53)"><path d="M.5 0V17.5H18" fill="none" stroke="#999" stroke-width="1"/><rect x="1" y="2" width="10" height="3" fill="#f2c87e"/><rect x="1" y="5" width="16" height="3" fill="#8db4e2"/><rect x="1" y="10" width="13" height="3" fill="#f2c87e"/><rect x="1" y="13" width="10" height="3" fill="#8db4e2"/></g>
<g transform="translate(144 53)"><path d="M.5 0V17.5H18" fill="none" stroke="#999" stroke-width="1"/><rect x="2" y="7" width="3" height="10" fill="#f2c87e"/><rect x="5" y="1" width="3" height="16" fill="#8db4e2"/><rect x="10" y="4" width="3" height="13" fill="#f2c87e"/><rect x="13" y="7" width="3" height="10" fill="#8db4e2"/></g>
<g transform="translate(172 53)"><path d="M.5 0V17.5H18" fill="none" stroke="#999" stroke-width="1"/><rect x="1" y="3" width="5" height="5" fill="#8a8a8a"/><rect x="6" y="3" width="10" height="5" fill="#8db4e2"/><rect x="1" y="10" width="8" height="5" fill="#8a8a8a"/><rect x="9" y="10" width="7" height="5" fill="#8db4e2"/></g>
<g transform="translate(200 53)"><path d="M.5 0V17.5H18" fill="none" stroke="#999" stroke-width="1"/><rect x="3" y="2" width="5" height="8" fill="#8db4e2"/><rect x="3" y="10" width="5" height="7" fill="#8a8a8a"/><rect x="11" y="2" width="5" height="10" fill="#8db4e2"/><rect x="11" y="12" width="5" height="5" fill="#8a8a8a"/></g>
<g transform="translate(60 77)"><path d="M.5 0V17.5H18" fill="none" stroke="#999" stroke-width="1"/><path d="M1.2 14.8L11.9 4L17.9 8.7" fill="none" stroke="#f0b9a8" stroke-width="1" stroke-dasharray="1.6 .5"/><path d="M1.2 9.9L4.5 6.2L11.5 10.7L17.9 3.7" fill="none" stroke="#3b7fc4" stroke-width="1"/></g>
<g transform="translate(88 77)"><path d="M.5 0V17.5H18" fill="none" stroke="#999" stroke-width="1"/><path d="M1 6.5L5.5 3.7L9.8 7.4L7 10L1 11Z" fill="#f6deb4"/><path d="M1 8.6L5 8L7.2 9.8L4 11L1 10.8Z" fill="#b7cfe8"/><path d="M9.8 7.4L14 2.9L18 4V13L12 13.5L7 10Z" fill="#e8913f"/><path d="M7 10L10 8.5L14 9.8L18 9V13L12 13.6Z" fill="#efb46f"/><path d="M1 11L6 10L12 13.8L18 12.6V17H1Z" fill="#bdbdbd"/></g>
<g transform="translate(116 77)"><path d="M0 0V17.5H18" fill="none" stroke="#999" stroke-width="1"/><path d="M1 5.5L4 3L7.5 6L12.5 1.5L17 5.5L18 4.5V17.5H1Z" fill="#f2c87e"/><path d="M1 10L4.5 12.5L9 8L14 12L18 8.5V17.5H1Z" fill="#3b7fc4"/><path d="M1 14.5L4 12L7.5 15.5L9.5 14L13 16L18 11.5V17.5H1Z" fill="#f0a956"/></g>
<g transform="translate(144 77)"><path d="M.5 0V17.5H18" fill="none" stroke="#999" stroke-width="1"/><rect x="17" y="0" width="1" height="17.5" fill="#e8913f"/><rect x="4" y="3" width="4" height="7.5" fill="#f0a860"/><rect x="4" y="10.5" width="4" height="6.5" fill="#bdbdbd"/><rect x="10" y="7" width="4" height="5.5" fill="#f0a860"/><rect x="10" y="12.5" width="4" height="4.5" fill="#bdbdbd"/><path d="M1 13.5L6.5 9.5L12 12.5L16.5 8" fill="none" stroke="#e0683a" stroke-width="1"/></g>
<g transform="translate(172 77)"><path d="M.5 0V17.5H18" fill="none" stroke="#999" stroke-width="1"/><rect x="17" y="0" width="1" height="17.5" fill="#e8913f"/><rect x="2" y="7" width="3" height="10" fill="#f2c87e"/><rect x="5" y="1" width="3" height="16" fill="#8db4e2"/><rect x="10" y="4" width="3" height="13" fill="#f2c87e"/><rect x="13" y="7" width="3" height="10" fill="#8db4e2"/><path d="M1 13.5L6.5 9L12 12.5L16.5 8" fill="none" stroke="#e0683a" stroke-width="1"/></g>
<g transform="translate(200 77)"><path d="M.5 0V17.5H18" fill="none" stroke="#999" stroke-width="1"/><path d="M2 6L17 3V17H2Z" fill="#d9a36f"/><rect x="2" y="6" width="3" height="4" fill="#f8e0b8"/><rect x="2" y="10" width="3" height="3" fill="#8db4e2"/><rect x="2" y="13" width="3" height="4" fill="#f0a860"/><rect x="7.5" y="5" width="4" height="5" fill="#f8e0b8"/><rect x="7.5" y="10" width="4" height="3" fill="#f0a860"/><rect x="7.5" y="13" width="4" height="4" fill="#8db4e2"/><rect x="14" y="3" width="3" height="6" fill="#f8e0b8"/><rect x="14" y="9" width="3" height="4" fill="#8db4e2"/><rect x="14" y="13" width="3" height="4" fill="#f0a860"/><path d="M5 10L7.5 13V17L5 13ZM11.5 13L14 9V13L11.5 17Z" fill="#7a4a30" opacity=".7"/></g>
<g transform="translate(60 101)"><path d="M.5 0V17.5H18" fill="none" stroke="#999" stroke-width="1"/><path d="M3 17V4H8" fill="none" stroke="#ddd" stroke-width="1.8"/><rect x="6" y="4" width="2" height="5" fill="#e0553a"/><rect x="8" y="9" width="2.6" height="5" fill="#e0553a"/><rect x="11.2" y="1" width="1.8" height="13" fill="#69b39a"/><path d="M11.2 1.6H15.4V17" fill="none" stroke="#ddd" stroke-width="1.8"/></g>
<g transform="translate(88 101)"><path d="M.5 0V17.5H18" fill="none" stroke="#999" stroke-width="1"/><circle cx="4.5" cy="5.5" r="1.6" fill="#e0553a"/><circle cx="12.6" cy="4.5" r="1.6" fill="#69b39a"/><circle cx="9.4" cy="9.4" r="1.6" fill="#f2c87e"/><circle cx="3.5" cy="11.5" r="1.6" fill="#3b7fc4"/><circle cx="16.4" cy="9.4" r="1.6" fill="#3b7fc4"/><circle cx="13.5" cy="13.5" r="1.5" fill="#8a8a8a"/></g>
<g transform="translate(116 101)"><path d="M8.6 8.4L8.90 -0.19A8.6 8.6 0 1 1 4.04 15.69Z" fill="#8db4e2" stroke="#333" stroke-width=".5"/><path d="M8.6 8.4L4.04 15.69A8.6 8.6 0 0 1 0.63 5.18Z" fill="#f0bcae" stroke="#333" stroke-width=".5"/><path d="M8.6 8.4L0.63 5.18A8.6 8.6 0 0 1 8.90 -0.19Z" fill="#f6deb4" stroke="#333" stroke-width=".5"/></g>
<g transform="translate(144 101)"><path d="M5.35 3.18A6.7 6.7 0 0 1 11.07 2.43" fill="none" stroke="#8db4e2" stroke-width="4.4"/><path d="M11.73 2.68A6.7 6.7 0 0 1 15.12 6.07" fill="none" stroke="#f2c87e" stroke-width="4.4"/><path d="M15.37 6.73A6.7 6.7 0 0 1 13.31 13.93" fill="none" stroke="#3b7fc4" stroke-width="4.4"/><path d="M12.75 14.35A6.7 6.7 0 0 1 3.72 12.92" fill="none" stroke="#3b7fc4" stroke-width="4.4"/><path d="M3.32 12.35A6.7 6.7 0 0 1 4.78 3.59" fill="none" stroke="#3b7fc4" stroke-width="4.4"/></g>
<g transform="translate(172 101)"><rect x="0" y="0" width="18" height="18" fill="#999"/><rect x="1" y="1" width="3" height="5" fill="#fff"/><rect x="5" y="1" width="8" height="4" fill="#c5d9ef"/><rect x="14" y="1" width="3" height="9" fill="#c5d9ef"/><rect x="1" y="7" width="3" height="3" fill="#fff"/><rect x="5" y="6" width="8" height="4" fill="#c5d9ef"/><rect x="1" y="11" width="7" height="6" fill="#fff"/><rect x="9" y="11" width="8" height="6" fill="#fff"/></g>
<g transform="translate(200 101)"><circle cx="8.6" cy="8.4" r="8.2" fill="#fff" stroke="#3b7fc4" stroke-width="1"/><path d="M.8 6H16.4M.4 10.6H16.8M2.6 14H14.6M2.6 2.8H14.6" stroke="#7fb59d" stroke-width=".8" fill="none"/><path d="M5 1.2C3.6 5 3.6 12 5 15.8M12.2 1.2C13.6 5 13.6 12 12.2 15.8M8.6 .4V16.4" stroke="#7fb59d" stroke-width=".8" fill="none"/></g>
<g transform="translate(60 125)"><path d="M0 1L6 2.6L14 1.4V4L6 5L3 4Z" fill="#c8c8c8"/><path d="M15 1.4L18 0V9L16.6 10L15 9.6L16 6Z" fill="#f2c87e"/><path d="M1 5L5 4.6L6 7L7.6 8.4L6 9.6H0.4L1.6 7Z" fill="#3b7fc4"/><path d="M7.4 5.4L14.6 4.6L14 8.6L8.6 9Z" fill="#c8c8c8"/><path d="M0.4 10.6L6 10.4L8 14L7 17.6L4 14Z" fill="#c8c8c8"/><path d="M8.4 10L15 9.6L17 11V15L12 16L9 17L8.6 14Z" fill="#8db4e2"/></g>
<g transform="translate(88 125)"><rect x="0" y="2" width="18" height="3" fill="#8db4e2"/><rect x="2" y="6" width="14" height="3" fill="#f2c87e"/><rect x="4" y="10" width="10" height="3" fill="#8db4e2"/><rect x="6" y="14" width="6" height="3" fill="#8db4e2"/></g>
<g transform="translate(116 125)"><path d="M2.01 13.94A7.2 7.2 0 0 1 13.23 6.38" fill="none" stroke="#f2c87e" stroke-width="3.6"/><path d="M13.23 6.38A7.2 7.2 0 0 1 15.99 13.94" fill="none" stroke="#69b39a" stroke-width="3.6"/><path d="M7.4 12.6L13 8" stroke="#555" stroke-width="1.4" stroke-linecap="round"/><circle cx="7.6" cy="12.4" r="1.2" fill="#555"/></g>
<g transform="translate(144 125)"><rect x=".5" y="2.5" width="17" height="12" fill="#fff" stroke="#aaa" stroke-width="1"/><text x="9" y="10" text-anchor="middle" font-family="Liberation Sans, sans-serif" font-weight="bold" font-size="7.6" fill="#3b7fc4">123</text><rect x="3" y="12" width="12" height=".8" fill="#444"/></g>
<g transform="translate(172 125)"><rect x=".5" y=".5" width="17" height="17" fill="#fff" stroke="#aaa" stroke-width="1"/><rect x="2.2" y="2" width="2.4" height="14" fill="#aaa"/><rect x="7" y="2.4" width="6" height="1.6" fill="#8db4e2"/><rect x="7" y="5.2" width="3" height=".7" fill="#aaa"/><rect x="7" y="8.4" width="6" height="1.6" fill="#8db4e2"/><rect x="7" y="11.2" width="3" height=".7" fill="#aaa"/></g>
<g transform="translate(200 125)"><rect x=".5" y="2.5" width="17" height="12" fill="#fff" stroke="#aaa" stroke-width="1"/><path d="M3.4 9L5.8 5.4L8.2 9Z" fill="#5aa58c"/><path d="M9.8 5.6H15L12.4 9.2Z" fill="#dc5337"/><rect x="3" y="12" width="12" height=".8" fill="#444"/></g>
<g transform="translate(60 149)"><rect x="0" y="0" width="17" height="18" fill="#fff"/><rect x="0" y="0" width="17" height="3" fill="#3b7fc4"/><rect x="3" y="4.4" width="2.8" height="2.8" fill="#6e9fd6"/><rect x="3" y="8.4" width="2.8" height="2.8" fill="#e8b04e"/><rect x="3" y="12.4" width="2.8" height="2.8" fill="#e8907e"/><path d="M8.4 9.4H19.4L15 14V19.4H13V14Z" fill="#8a8a8a"/></g>
<g transform="translate(88 149)"><rect x="1" y="0" width="16" height="18" fill="#bbb"/><rect x="1" y="0" width="16" height="3" fill="#3b7fc4"/><rect x="1.6" y="3.5" width="4.2" height="4" fill="#fff"/><rect x="1.6" y="8.3" width="4.2" height="4" fill="#fff"/><rect x="1.6" y="13.2" width="4.2" height="4.2" fill="#fff"/><rect x="6.6" y="3.5" width="4.2" height="4" fill="#fff"/><rect x="6.6" y="8.3" width="4.2" height="4" fill="#fff"/><rect x="6.6" y="13.2" width="4.2" height="4.2" fill="#fff"/><rect x="11.6" y="3.5" width="4.8" height="4" fill="#fff"/><rect x="11.6" y="8.3" width="4.8" height="4" fill="#fff"/><rect x="11.6" y="13.2" width="4.8" height="4.2" fill="#fff"/></g>
<g transform="translate(116 149)"><rect x="1" y="0" width="16" height="18" fill="#bbb"/><rect x="1" y="0" width="16" height="3" fill="#3b7fc4"/><rect x="1.6" y="3.5" width="4.2" height="4" fill="#fff"/><rect x="1.6" y="8.3" width="4.2" height="4" fill="#fff"/><rect x="1.6" y="13.2" width="4.2" height="4.2" fill="#cfe0f3"/><rect x="6.6" y="3.5" width="4.2" height="4" fill="#fff"/><rect x="6.6" y="8.3" width="4.2" height="4" fill="#fff"/><rect x="6.6" y="13.2" width="4.2" height="4.2" fill="#cfe0f3"/><rect x="11.6" y="3.5" width="4.8" height="4" fill="#cfe0f3"/><rect x="11.6" y="8.3" width="4.8" height="4" fill="#cfe0f3"/><rect x="11.6" y="13.2" width="4.8" height="4.2" fill="#cfe0f3"/></g>
<g transform="translate(144 149)"><rect x="0" y="1" width="18" height="15" fill="#e8e6df"/><rect x="0" y="1" width="18" height="2.6" fill="#2e9bc0"/><rect x="1.2" y="2" width="5.4" height=".7" fill="#fff"/><rect x="12" y="1.9" width=".9" height=".9" fill="#fff"/><rect x="14" y="1.9" width=".9" height=".9" fill="#fff"/><rect x="16" y="1.9" width=".9" height=".9" fill="#e66"/><path d="M6 6.4L2.4 9.6L6 12.8M12 6.4L15.6 9.6L12 12.8M10.4 5.4L7.6 14" fill="none" stroke="#2f4a52" stroke-width="1.1"/></g>
<g transform="translate(172 149)"><circle cx="9.7" cy="9.5" r="8.8" fill="#1a7fd4" stroke="#bdbdbd" stroke-width="1"/><path d="M4 4.6L8 2.6L9.4 4.6L6 7.6L3 8ZM11 2L16 4.4L17.6 9L14.6 8L13 4.6ZM2 11L5.6 9.6L7 12.6L4.4 15ZM9 13L13 11L14 14L11 17.4L8.4 16Z" fill="#3ab54a"/><path d="M2.2 5.6C7 7.4 13 6 16.6 3.8M1 10C7 12 14 10.6 18.4 7.8M2.6 14.6C8 16.2 14 14.8 17.8 12M6.6 1.4C5 7 6.6 13.6 9.4 18.2M11.6 1C11.2 7 13 13 15.6 16" fill="none" stroke="#c4c4c4" stroke-width=".8"/></g>
<g transform="translate(200 149)"><rect x="-1" y="-1" width="20" height="20" fill="#2a2a2a" stroke="#f2c811" stroke-width="2"/><rect x=".2" y=".2" width="17.6" height="17.6" fill="none" stroke="#fdf3b0" stroke-width=".5"/><path d="M2.4 1.6L3.6 1L7.4 6L6.2 7Z" fill="#999"/><path d="M6.4 6.2L10.8 10.8" stroke="#999" stroke-width="1.1"/><path d="M10 11.4L12 9.6L17.4 15L15.2 17.4Z" fill="#999"/><path d="M13.2 4.8L4.8 13.2" stroke="#999" stroke-width="2.4"/><path d="M14.6 .8A2.6 2.6 0 1 0 17.2 3.4" fill="none" stroke="#999" stroke-width="1.7"/><path d="M.8 14.6A2.6 2.6 0 1 1 3.4 17.2" fill="none" stroke="#999" stroke-width="1.7"/></g>
<rect x="62" y="179" width="2.2" height="2.2" fill="#fff"/><rect x="68" y="179" width="2.2" height="2.2" fill="#fff"/><rect x="74" y="179" width="2.2" height="2.2" fill="#fff"/>
<path d="M212.5 18.5L218.5 24.5L212.5 30.5" fill="none" stroke="#ddd" stroke-width="1"/>
<path d="M71 202.5H87" stroke="#fff" stroke-width="1"/><rect x="71.5" y="205.5" width="19" height="6" fill="none" stroke="#fff" stroke-width="1" stroke-dasharray="1.5 1"/><rect x="71.5" y="214.5" width="19" height="6" fill="none" stroke="#fff" stroke-width="1" stroke-dasharray="1.5 1"/>
<rect x="112.5" y="202.5" width="14" height="4" rx="1.5" fill="none" stroke="#fff" stroke-width="1"/><path d="M126.5 204.5H129.5V209.5H120.5V212.5" fill="none" stroke="#fff" stroke-width="1"/><rect x="118.5" y="212.5" width="4.5" height="9" rx=".8" fill="none" stroke="#fff" stroke-width="1"/>
<circle cx="159.8" cy="210.6" r="8.3" fill="none" stroke="#fff" stroke-width="1"/><path d="M166 217L171 222" stroke="#fff" stroke-width="1.2"/><path d="M152.4 211L155.6 208.6L159 210.4L165.6 205.4" fill="none" stroke="#fff" stroke-width="1"/><path d="M155.5 212.5V217.5M158.5 213V218.6M161.5 212V218.6M164.5 210.5V216.5" stroke="#fff" stroke-width="1"/>
</svg>
<div class="flabel" style="top:238px">Latitude</div>
<div class="fbox" style="top:259px"><div class="fld">latitude<svg width="164" height="23" viewBox="0 0 164 23"><path d="M133.5 10L141.5 10L137.5 14.5Z" fill="#999"/><path d="M151 8L158 15.5M158 8L151 15.5" stroke="#fff" stroke-width=".95"/></svg></div></div>
<div class="flabel" style="top:308px">Longitude</div>
<div class="fbox" style="top:329px"><div class="fld">longitude<svg width="164" height="23" viewBox="0 0 164 23"><path d="M133.5 10L141.5 10L137.5 14.5Z" fill="#999"/><path d="M151 8L158 15.5M158 8L151 15.5" stroke="#fff" stroke-width=".95"/></svg></div></div>
<div class="flabel" style="top:378px">Marker Labels</div>
<div class="fbox" style="top:399px"><div class="fld">city<svg width="164" height="23" viewBox="0 0 164 23"><path d="M133.5 10L141.5 10L137.5 14.5Z" fill="#999"/><path d="M151 8L158 15.5M158 8L151 15.5" stroke="#fff" stroke-width=".95"/></svg></div></div>
<div id="scroll"></div><div id="pedge"></div>
</div>
</div>
</body>
</html>
